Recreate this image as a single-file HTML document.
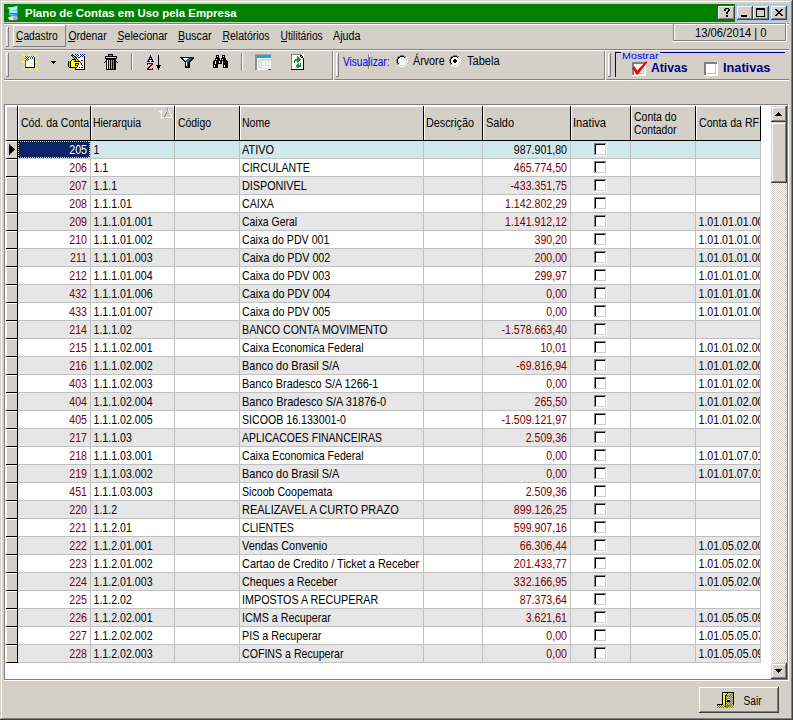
<!DOCTYPE html>
<html><head><meta charset="utf-8"><title>Plano de Contas em Uso pela Empresa</title>
<style>
html,body{margin:0;padding:0;background:#d4d0c8;overflow:hidden}
svg{display:block;font-family:"Liberation Sans",sans-serif}
text{shape-rendering:auto}
</style></head><body>
<svg width="793" height="720" viewBox="0 0 793 720" shape-rendering="crispEdges">
<defs><clipPath id="rfclip"><rect x="696" y="141" width="64" height="530"/></clipPath></defs>
<rect x="0" y="0" width="793" height="720" fill="#d4d0c8"/>
<rect x="1" y="1" width="791" height="1" fill="#fff"/>
<rect x="1" y="1" width="1" height="718" fill="#fff"/>
<rect x="0" y="719" width="793" height="1" fill="#404040"/>
<rect x="792" y="0" width="1" height="720" fill="#404040"/>
<rect x="1" y="718" width="791" height="1" fill="#808080"/>
<rect x="791" y="1" width="1" height="718" fill="#808080"/>
<rect x="4" y="4" width="731" height="18" fill="#008000"/>
<rect x="735" y="4" width="54" height="18" fill="#a6caf0"/>
<g transform="translate(6 5)" shape-rendering="auto">
<path d="M3 3 L6 2 L9 1.5 L12 0.5 V10 L5 11 L3 10 Z" fill="#60d0f8"/>
<path d="M4 3 L12 1 V4 L4 6 Z" fill="#b8f8ff"/>
<path d="M1 3 L4 2 L5 3 L3 4 Z" fill="#f0e8ff"/>
<path d="M11 0 L12 0 V10 L11 10 Z" fill="#8070d0"/>
<rect x="4.5" y="6.5" width="6" height="1.2" fill="#f8f8ff"/>
<rect x="4" y="8" width="7" height="1" fill="#5060a0"/>
<path d="M4 10 L11 9 V12 L5 12 Z" fill="#3898f0"/>
<path d="M2 12.5 Q7 10.5 12 12 L12 14 Q7 16 3 14.5 Z" fill="#f0ecff"/>
<path d="M7 12 Q10 11 12 12 L12 14 Q10 15 7 15 Z" fill="#a8a0e0"/>
</g>
<text transform="translate(25 17) scale(1.04 1)" font-size="11" fill="#fff" font-weight="bold">Plano de Contas em Uso pela Empresa</text>
<rect x="718" y="6" width="17" height="14" fill="#d4d0c8"/>
<rect x="718" y="6" width="17" height="1" fill="#fff"/>
<rect x="718" y="6" width="1" height="14" fill="#fff"/>
<rect x="718" y="19" width="17" height="1" fill="#404040"/>
<rect x="734" y="6" width="1" height="14" fill="#404040"/>
<rect x="719" y="18" width="15" height="1" fill="#808080"/>
<rect x="733" y="7" width="1" height="12" fill="#808080"/>
<rect x="737" y="6" width="16" height="14" fill="#d4d0c8"/>
<rect x="737" y="6" width="16" height="1" fill="#fff"/>
<rect x="737" y="6" width="1" height="14" fill="#fff"/>
<rect x="737" y="19" width="16" height="1" fill="#404040"/>
<rect x="752" y="6" width="1" height="14" fill="#404040"/>
<rect x="738" y="18" width="14" height="1" fill="#808080"/>
<rect x="751" y="7" width="1" height="12" fill="#808080"/>
<rect x="753" y="6" width="16" height="14" fill="#d4d0c8"/>
<rect x="753" y="6" width="16" height="1" fill="#fff"/>
<rect x="753" y="6" width="1" height="14" fill="#fff"/>
<rect x="753" y="19" width="16" height="1" fill="#404040"/>
<rect x="768" y="6" width="1" height="14" fill="#404040"/>
<rect x="754" y="18" width="14" height="1" fill="#808080"/>
<rect x="767" y="7" width="1" height="12" fill="#808080"/>
<rect x="771" y="6" width="16" height="14" fill="#d4d0c8"/>
<rect x="771" y="6" width="16" height="1" fill="#fff"/>
<rect x="771" y="6" width="1" height="14" fill="#fff"/>
<rect x="771" y="19" width="16" height="1" fill="#404040"/>
<rect x="786" y="6" width="1" height="14" fill="#404040"/>
<rect x="772" y="18" width="14" height="1" fill="#808080"/>
<rect x="785" y="7" width="1" height="12" fill="#808080"/>
<rect x="725" y="8" width="4" height="1" fill="#000"/>
<rect x="724" y="9" width="2" height="2" fill="#000"/>
<rect x="728" y="9" width="2" height="2" fill="#000"/>
<rect x="727" y="11" width="2" height="1" fill="#000"/>
<rect x="726" y="12" width="2" height="2" fill="#000"/>
<rect x="726" y="15" width="2" height="2" fill="#000"/>
<rect x="741" y="15" width="6" height="2" fill="#000"/>
<rect x="756" y="8" width="9" height="9" fill="#000"/>
<rect x="757" y="10" width="7" height="6" fill="#d4d0c8"/>
<rect x="775" y="9" width="2" height="1" fill="#000"/>
<rect x="781" y="9" width="2" height="1" fill="#000"/>
<rect x="776" y="10" width="2" height="1" fill="#000"/>
<rect x="780" y="10" width="2" height="1" fill="#000"/>
<rect x="777" y="11" width="4" height="1" fill="#000"/>
<rect x="778" y="12" width="2" height="1" fill="#000"/>
<rect x="777" y="13" width="4" height="1" fill="#000"/>
<rect x="776" y="14" width="2" height="1" fill="#000"/>
<rect x="780" y="14" width="2" height="1" fill="#000"/>
<rect x="775" y="15" width="2" height="1" fill="#000"/>
<rect x="781" y="15" width="2" height="1" fill="#000"/>
<rect x="4" y="23" width="785" height="1" fill="#808080"/>
<rect x="4" y="24" width="785" height="1" fill="#fff"/>
<rect x="6" y="27" width="1" height="20" fill="#fff"/>
<rect x="6" y="27" width="2" height="1" fill="#fff"/>
<rect x="8" y="27" width="1" height="20" fill="#808080"/>
<rect x="6" y="46" width="3" height="1" fill="#808080"/>
<rect x="13" y="25" width="53" height="1" fill="#fff"/>
<rect x="13" y="25" width="1" height="21" fill="#fff"/>
<rect x="13" y="46" width="53" height="1" fill="#808080"/>
<rect x="65" y="25" width="1" height="22" fill="#808080"/>
<text x="16" y="40" font-size="12" textLength="41.6" lengthAdjust="spacingAndGlyphs">Cadastro</text>
<text x="68.5" y="40" font-size="12" textLength="38.1" lengthAdjust="spacingAndGlyphs">Ordenar</text>
<text x="117.5" y="40" font-size="12" textLength="50.1" lengthAdjust="spacingAndGlyphs">Selecionar</text>
<text x="178" y="40" font-size="12" textLength="33.6" lengthAdjust="spacingAndGlyphs">Buscar</text>
<text x="222.5" y="40" font-size="12" textLength="47.1" lengthAdjust="spacingAndGlyphs">Relatórios</text>
<text x="280.6" y="40" font-size="12" textLength="42.1" lengthAdjust="spacingAndGlyphs">Utilitários</text>
<text x="333" y="40" font-size="12" textLength="27.6" lengthAdjust="spacingAndGlyphs">Ajuda</text>
<rect x="16" y="41" width="6" height="1" fill="#000"/>
<rect x="68" y="41" width="7" height="1" fill="#000"/>
<rect x="117" y="41" width="6" height="1" fill="#000"/>
<rect x="178" y="41" width="6" height="1" fill="#000"/>
<rect x="222" y="41" width="6" height="1" fill="#000"/>
<rect x="281" y="41" width="6" height="1" fill="#000"/>
<rect x="673" y="23" width="114" height="1" fill="#808080"/>
<rect x="673" y="23" width="1" height="19" fill="#808080"/>
<rect x="674" y="24" width="112" height="1" fill="#fff"/>
<rect x="674" y="24" width="1" height="17" fill="#fff"/>
<rect x="674" y="40" width="112" height="1" fill="#808080"/>
<rect x="785" y="24" width="1" height="17" fill="#808080"/>
<rect x="673" y="41" width="114" height="1" fill="#fff"/>
<rect x="786" y="23" width="1" height="19" fill="#fff"/>
<text x="695" y="37" font-size="12" textLength="71.5" lengthAdjust="spacingAndGlyphs">13/06/2014 | 0</text>
<rect x="4" y="49" width="785" height="1" fill="#808080"/>
<rect x="4" y="50" width="785" height="1" fill="#fff"/>
<rect x="6" y="53" width="1" height="24" fill="#fff"/>
<rect x="6" y="53" width="2" height="1" fill="#fff"/>
<rect x="8" y="53" width="1" height="24" fill="#808080"/>
<rect x="6" y="76" width="3" height="1" fill="#808080"/>
<rect x="332" y="51" width="1" height="28" fill="#808080"/>
<rect x="333" y="51" width="1" height="28" fill="#fff"/>
<rect x="336" y="53" width="1" height="24" fill="#fff"/>
<rect x="336" y="53" width="2" height="1" fill="#fff"/>
<rect x="338" y="53" width="1" height="24" fill="#808080"/>
<rect x="336" y="76" width="3" height="1" fill="#808080"/>
<rect x="604" y="51" width="1" height="28" fill="#808080"/>
<rect x="605" y="51" width="1" height="28" fill="#fff"/>
<rect x="608" y="53" width="1" height="24" fill="#fff"/>
<rect x="608" y="53" width="2" height="1" fill="#fff"/>
<rect x="610" y="53" width="1" height="24" fill="#808080"/>
<rect x="608" y="76" width="3" height="1" fill="#808080"/>
<rect x="4" y="79" width="785" height="1" fill="#808080"/>
<rect x="4" y="80" width="785" height="1" fill="#fff"/>
<rect x="333" y="79" width="1" height="1" fill="#fff"/>
<rect x="605" y="79" width="1" height="1" fill="#fff"/>
<rect x="131" y="53" width="1" height="18" fill="#808080"/>
<rect x="132" y="53" width="1" height="18" fill="#fff"/>
<rect x="241" y="53" width="1" height="18" fill="#808080"/>
<rect x="242" y="53" width="1" height="18" fill="#fff"/>
<rect x="25" y="56" width="10" height="12" fill="#fff"/>
<rect x="34" y="57" width="1" height="11" fill="#000"/>
<rect x="25" y="67" width="10" height="1" fill="#000"/>
<rect x="25" y="60" width="1" height="7" fill="#606060"/>
<rect x="25" y="56" width="1" height="1" fill="#a00000"/>
<rect x="27" y="56" width="1" height="1" fill="#a00000"/>
<rect x="26" y="57" width="1" height="1" fill="#a00000"/>
<rect x="28" y="57" width="1" height="1" fill="#a00000"/>
<rect x="25" y="58" width="1" height="1" fill="#a00000"/>
<rect x="27" y="58" width="1" height="1" fill="#a00000"/>
<rect x="26" y="59" width="1" height="1" fill="#a00000"/>
<rect x="28" y="59" width="1" height="1" fill="#a00000"/>
<rect x="25" y="60" width="1" height="1" fill="#a00000"/>
<rect x="27" y="60" width="1" height="1" fill="#a00000"/>
<rect x="29" y="56" width="1" height="1" fill="#008080"/>
<rect x="31" y="56" width="1" height="1" fill="#008080"/>
<rect x="33" y="56" width="1" height="1" fill="#008080"/>
<rect x="30" y="57" width="1" height="1" fill="#008080"/>
<rect x="32" y="57" width="1" height="1" fill="#008080"/>
<rect x="34" y="57" width="1" height="1" fill="#008080"/>
<rect x="29" y="58" width="0" height="0" fill="#008080"/>
<rect x="30" y="58" width="1" height="1" fill="#008080"/>
<rect x="32" y="58" width="1" height="1" fill="#008080"/>
<rect x="22" y="54" width="2" height="1" fill="#ffff00"/>
<rect x="23" y="55" width="2" height="1" fill="#ffff00"/>
<rect x="24" y="56" width="1" height="1" fill="#ffff00"/>
<rect x="29" y="54" width="2" height="2" fill="#ffff00"/>
<rect x="36" y="54" width="2" height="1" fill="#ffff00"/>
<rect x="35" y="55" width="2" height="1" fill="#ffff00"/>
<rect x="35" y="56" width="1" height="1" fill="#ffff00"/>
<rect x="22" y="61" width="3" height="2" fill="#ffff00"/>
<rect x="35" y="61" width="3" height="2" fill="#ffff00"/>
<rect x="24" y="67" width="1" height="1" fill="#ffff00"/>
<rect x="23" y="68" width="2" height="1" fill="#ffff00"/>
<rect x="23" y="69" width="1" height="1" fill="#ffff00"/>
<rect x="29" y="68" width="2" height="2" fill="#ffff00"/>
<rect x="35" y="67" width="1" height="1" fill="#ffff00"/>
<rect x="35" y="68" width="2" height="1" fill="#ffff00"/>
<rect x="36" y="69" width="2" height="1" fill="#ffff00"/>
<rect x="51" y="61" width="5" height="1" fill="#000"/>
<rect x="52" y="62" width="3" height="1" fill="#000"/>
<rect x="53" y="63" width="1" height="1" fill="#000"/>
<rect x="72" y="54" width="1" height="1" fill="#000"/>
<rect x="75" y="54" width="1" height="1" fill="#c00000"/>
<rect x="76" y="54" width="1" height="1" fill="#fff"/>
<rect x="77" y="54" width="1" height="1" fill="#c00000"/>
<rect x="78" y="54" width="1" height="1" fill="#fff"/>
<rect x="79" y="54" width="1" height="1" fill="#fff"/>
<rect x="80" y="54" width="1" height="1" fill="#0000a0"/>
<rect x="81" y="54" width="1" height="1" fill="#fff"/>
<rect x="82" y="54" width="1" height="1" fill="#0000a0"/>
<rect x="83" y="54" width="1" height="1" fill="#fff"/>
<rect x="84" y="54" width="1" height="1" fill="#0000a0"/>
<rect x="71" y="55" width="1" height="1" fill="#000"/>
<rect x="72" y="55" width="1" height="1" fill="#c00000"/>
<rect x="73" y="55" width="1" height="1" fill="#000"/>
<rect x="75" y="55" width="1" height="1" fill="#fff"/>
<rect x="76" y="55" width="1" height="1" fill="#c00000"/>
<rect x="77" y="55" width="1" height="1" fill="#fff"/>
<rect x="78" y="55" width="1" height="1" fill="#c00000"/>
<rect x="79" y="55" width="1" height="1" fill="#fff"/>
<rect x="80" y="55" width="1" height="1" fill="#fff"/>
<rect x="81" y="55" width="1" height="1" fill="#0000a0"/>
<rect x="82" y="55" width="1" height="1" fill="#fff"/>
<rect x="83" y="55" width="1" height="1" fill="#0000a0"/>
<rect x="84" y="55" width="1" height="1" fill="#fff"/>
<rect x="72" y="56" width="1" height="1" fill="#000"/>
<rect x="73" y="56" width="1" height="1" fill="#ffff00"/>
<rect x="74" y="56" width="1" height="1" fill="#000"/>
<rect x="75" y="56" width="1" height="1" fill="#c00000"/>
<rect x="76" y="56" width="1" height="1" fill="#fff"/>
<rect x="77" y="56" width="1" height="1" fill="#c00000"/>
<rect x="78" y="56" width="1" height="1" fill="#fff"/>
<rect x="79" y="56" width="1" height="1" fill="#fff"/>
<rect x="80" y="56" width="1" height="1" fill="#0000a0"/>
<rect x="81" y="56" width="1" height="1" fill="#fff"/>
<rect x="82" y="56" width="1" height="1" fill="#0000a0"/>
<rect x="83" y="56" width="1" height="1" fill="#fff"/>
<rect x="84" y="56" width="1" height="1" fill="#000"/>
<rect x="73" y="57" width="1" height="1" fill="#000"/>
<rect x="74" y="57" width="1" height="1" fill="#ffff00"/>
<rect x="75" y="57" width="1" height="1" fill="#000"/>
<rect x="76" y="57" width="1" height="1" fill="#c00000"/>
<rect x="77" y="57" width="1" height="1" fill="#fff"/>
<rect x="78" y="57" width="1" height="1" fill="#c00000"/>
<rect x="79" y="57" width="1" height="1" fill="#000"/>
<rect x="80" y="57" width="1" height="1" fill="#fff"/>
<rect x="81" y="57" width="1" height="1" fill="#fff"/>
<rect x="82" y="57" width="1" height="1" fill="#fff"/>
<rect x="83" y="57" width="1" height="1" fill="#fff"/>
<rect x="84" y="57" width="1" height="1" fill="#000"/>
<rect x="74" y="58" width="1" height="1" fill="#000"/>
<rect x="75" y="58" width="1" height="1" fill="#ffff00"/>
<rect x="76" y="58" width="1" height="1" fill="#000"/>
<rect x="77" y="58" width="1" height="1" fill="#fff"/>
<rect x="78" y="58" width="1" height="1" fill="#fff"/>
<rect x="79" y="58" width="1" height="1" fill="#fff"/>
<rect x="80" y="58" width="1" height="1" fill="#fff"/>
<rect x="81" y="58" width="1" height="1" fill="#fff"/>
<rect x="82" y="58" width="1" height="1" fill="#fff"/>
<rect x="83" y="58" width="1" height="1" fill="#fff"/>
<rect x="84" y="58" width="1" height="1" fill="#000"/>
<rect x="72" y="59" width="1" height="1" fill="#000"/>
<rect x="73" y="59" width="1" height="1" fill="#000"/>
<rect x="74" y="59" width="1" height="1" fill="#000"/>
<rect x="75" y="59" width="1" height="1" fill="#000"/>
<rect x="76" y="59" width="1" height="1" fill="#ffff00"/>
<rect x="77" y="59" width="1" height="1" fill="#000"/>
<rect x="78" y="59" width="1" height="1" fill="#fff"/>
<rect x="79" y="59" width="1" height="1" fill="#fff"/>
<rect x="80" y="59" width="1" height="1" fill="#fff"/>
<rect x="81" y="59" width="1" height="1" fill="#fff"/>
<rect x="82" y="59" width="1" height="1" fill="#fff"/>
<rect x="83" y="59" width="1" height="1" fill="#fff"/>
<rect x="84" y="59" width="1" height="1" fill="#000"/>
<rect x="71" y="60" width="1" height="1" fill="#000"/>
<rect x="72" y="60" width="1" height="1" fill="#ffff00"/>
<rect x="73" y="60" width="1" height="1" fill="#ffff00"/>
<rect x="74" y="60" width="1" height="1" fill="#ffff00"/>
<rect x="75" y="60" width="1" height="1" fill="#000"/>
<rect x="77" y="60" width="1" height="1" fill="#ffff00"/>
<rect x="78" y="60" width="1" height="1" fill="#000"/>
<rect x="79" y="60" width="1" height="1" fill="#fff"/>
<rect x="80" y="60" width="1" height="1" fill="#fff"/>
<rect x="81" y="60" width="1" height="1" fill="#000"/>
<rect x="82" y="60" width="1" height="1" fill="#000"/>
<rect x="83" y="60" width="1" height="1" fill="#fff"/>
<rect x="84" y="60" width="1" height="1" fill="#000"/>
<rect x="68" y="61" width="1" height="1" fill="#000"/>
<rect x="69" y="61" width="1" height="1" fill="#00ffff"/>
<rect x="70" y="61" width="1" height="1" fill="#000"/>
<rect x="71" y="61" width="1" height="1" fill="#ffff00"/>
<rect x="72" y="61" width="1" height="1" fill="#fff"/>
<rect x="73" y="61" width="1" height="1" fill="#ffff00"/>
<rect x="74" y="61" width="1" height="1" fill="#000"/>
<rect x="75" y="61" width="1" height="1" fill="#000"/>
<rect x="76" y="61" width="1" height="1" fill="#000"/>
<rect x="77" y="61" width="1" height="1" fill="#000"/>
<rect x="78" y="61" width="1" height="1" fill="#000"/>
<rect x="79" y="61" width="1" height="1" fill="#000"/>
<rect x="80" y="61" width="1" height="1" fill="#fff"/>
<rect x="81" y="61" width="1" height="1" fill="#fff"/>
<rect x="82" y="61" width="1" height="1" fill="#fff"/>
<rect x="83" y="61" width="1" height="1" fill="#fff"/>
<rect x="84" y="61" width="1" height="1" fill="#000"/>
<rect x="68" y="62" width="1" height="1" fill="#000"/>
<rect x="69" y="62" width="1" height="1" fill="#00ffff"/>
<rect x="70" y="62" width="1" height="1" fill="#000"/>
<rect x="71" y="62" width="1" height="1" fill="#fff"/>
<rect x="72" y="62" width="1" height="1" fill="#ffff00"/>
<rect x="73" y="62" width="1" height="1" fill="#fff"/>
<rect x="74" y="62" width="1" height="1" fill="#ffff00"/>
<rect x="75" y="62" width="1" height="1" fill="#fff"/>
<rect x="76" y="62" width="1" height="1" fill="#ffff00"/>
<rect x="77" y="62" width="1" height="1" fill="#fff"/>
<rect x="78" y="62" width="1" height="1" fill="#ffff00"/>
<rect x="79" y="62" width="1" height="1" fill="#fff"/>
<rect x="80" y="62" width="1" height="1" fill="#000"/>
<rect x="81" y="62" width="1" height="1" fill="#fff"/>
<rect x="82" y="62" width="1" height="1" fill="#fff"/>
<rect x="83" y="62" width="1" height="1" fill="#fff"/>
<rect x="84" y="62" width="1" height="1" fill="#000"/>
<rect x="68" y="63" width="1" height="1" fill="#000"/>
<rect x="69" y="63" width="1" height="1" fill="#00ffff"/>
<rect x="70" y="63" width="1" height="1" fill="#000"/>
<rect x="71" y="63" width="1" height="1" fill="#ffff00"/>
<rect x="72" y="63" width="1" height="1" fill="#fff"/>
<rect x="73" y="63" width="1" height="1" fill="#ffff00"/>
<rect x="74" y="63" width="1" height="1" fill="#fff"/>
<rect x="75" y="63" width="1" height="1" fill="#000"/>
<rect x="76" y="63" width="1" height="1" fill="#000"/>
<rect x="77" y="63" width="1" height="1" fill="#000"/>
<rect x="78" y="63" width="1" height="1" fill="#000"/>
<rect x="79" y="63" width="1" height="1" fill="#fff"/>
<rect x="80" y="63" width="1" height="1" fill="#ffff00"/>
<rect x="81" y="63" width="1" height="1" fill="#000"/>
<rect x="82" y="63" width="1" height="1" fill="#fff"/>
<rect x="83" y="63" width="1" height="1" fill="#fff"/>
<rect x="84" y="63" width="1" height="1" fill="#000"/>
<rect x="68" y="64" width="1" height="1" fill="#000"/>
<rect x="69" y="64" width="1" height="1" fill="#00ffff"/>
<rect x="70" y="64" width="1" height="1" fill="#000"/>
<rect x="71" y="64" width="1" height="1" fill="#fff"/>
<rect x="72" y="64" width="1" height="1" fill="#ffff00"/>
<rect x="73" y="64" width="1" height="1" fill="#fff"/>
<rect x="74" y="64" width="1" height="1" fill="#ffff00"/>
<rect x="75" y="64" width="1" height="1" fill="#000"/>
<rect x="76" y="64" width="1" height="1" fill="#ffff00"/>
<rect x="77" y="64" width="1" height="1" fill="#fff"/>
<rect x="78" y="64" width="1" height="1" fill="#000"/>
<rect x="79" y="64" width="1" height="1" fill="#fff"/>
<rect x="80" y="64" width="1" height="1" fill="#fff"/>
<rect x="81" y="64" width="1" height="1" fill="#000"/>
<rect x="82" y="64" width="1" height="1" fill="#fff"/>
<rect x="83" y="64" width="1" height="1" fill="#fff"/>
<rect x="84" y="64" width="1" height="1" fill="#000"/>
<rect x="68" y="65" width="1" height="1" fill="#000"/>
<rect x="69" y="65" width="1" height="1" fill="#00ffff"/>
<rect x="70" y="65" width="1" height="1" fill="#000"/>
<rect x="71" y="65" width="1" height="1" fill="#ffff00"/>
<rect x="72" y="65" width="1" height="1" fill="#fff"/>
<rect x="73" y="65" width="1" height="1" fill="#ffff00"/>
<rect x="74" y="65" width="1" height="1" fill="#fff"/>
<rect x="75" y="65" width="1" height="1" fill="#000"/>
<rect x="76" y="65" width="1" height="1" fill="#000"/>
<rect x="77" y="65" width="1" height="1" fill="#000"/>
<rect x="78" y="65" width="1" height="1" fill="#fff"/>
<rect x="79" y="65" width="1" height="1" fill="#fff"/>
<rect x="80" y="65" width="1" height="1" fill="#fff"/>
<rect x="81" y="65" width="1" height="1" fill="#fff"/>
<rect x="82" y="65" width="1" height="1" fill="#000"/>
<rect x="83" y="65" width="1" height="1" fill="#fff"/>
<rect x="84" y="65" width="1" height="1" fill="#000"/>
<rect x="68" y="66" width="1" height="1" fill="#000"/>
<rect x="69" y="66" width="1" height="1" fill="#00ffff"/>
<rect x="70" y="66" width="1" height="1" fill="#000"/>
<rect x="71" y="66" width="1" height="1" fill="#fff"/>
<rect x="72" y="66" width="1" height="1" fill="#ffff00"/>
<rect x="73" y="66" width="1" height="1" fill="#ffff00"/>
<rect x="74" y="66" width="1" height="1" fill="#ffff00"/>
<rect x="75" y="66" width="1" height="1" fill="#fff"/>
<rect x="76" y="66" width="1" height="1" fill="#ffff00"/>
<rect x="77" y="66" width="1" height="1" fill="#000"/>
<rect x="78" y="66" width="1" height="1" fill="#fff"/>
<rect x="79" y="66" width="1" height="1" fill="#fff"/>
<rect x="80" y="66" width="1" height="1" fill="#fff"/>
<rect x="81" y="66" width="1" height="1" fill="#fff"/>
<rect x="82" y="66" width="1" height="1" fill="#fff"/>
<rect x="83" y="66" width="1" height="1" fill="#fff"/>
<rect x="84" y="66" width="1" height="1" fill="#000"/>
<rect x="69" y="67" width="1" height="1" fill="#000"/>
<rect x="70" y="67" width="1" height="1" fill="#000"/>
<rect x="71" y="67" width="1" height="1" fill="#000"/>
<rect x="72" y="67" width="1" height="1" fill="#000"/>
<rect x="73" y="67" width="1" height="1" fill="#000"/>
<rect x="74" y="67" width="1" height="1" fill="#000"/>
<rect x="75" y="67" width="1" height="1" fill="#000"/>
<rect x="76" y="67" width="1" height="1" fill="#000"/>
<rect x="77" y="67" width="1" height="1" fill="#fff"/>
<rect x="78" y="67" width="1" height="1" fill="#fff"/>
<rect x="79" y="67" width="1" height="1" fill="#000"/>
<rect x="80" y="67" width="1" height="1" fill="#fff"/>
<rect x="81" y="67" width="1" height="1" fill="#000"/>
<rect x="82" y="67" width="1" height="1" fill="#000"/>
<rect x="83" y="67" width="1" height="1" fill="#fff"/>
<rect x="84" y="67" width="1" height="1" fill="#000"/>
<rect x="75" y="68" width="1" height="1" fill="#000"/>
<rect x="76" y="68" width="1" height="1" fill="#fff"/>
<rect x="77" y="68" width="1" height="1" fill="#fff"/>
<rect x="78" y="68" width="1" height="1" fill="#fff"/>
<rect x="79" y="68" width="1" height="1" fill="#fff"/>
<rect x="80" y="68" width="1" height="1" fill="#fff"/>
<rect x="81" y="68" width="1" height="1" fill="#fff"/>
<rect x="82" y="68" width="1" height="1" fill="#fff"/>
<rect x="83" y="68" width="1" height="1" fill="#fff"/>
<rect x="84" y="68" width="1" height="1" fill="#000"/>
<rect x="75" y="69" width="1" height="1" fill="#000"/>
<rect x="76" y="69" width="1" height="1" fill="#000"/>
<rect x="77" y="69" width="1" height="1" fill="#000"/>
<rect x="78" y="69" width="1" height="1" fill="#000"/>
<rect x="79" y="69" width="1" height="1" fill="#000"/>
<rect x="80" y="69" width="1" height="1" fill="#000"/>
<rect x="81" y="69" width="1" height="1" fill="#000"/>
<rect x="82" y="69" width="1" height="1" fill="#000"/>
<rect x="83" y="69" width="1" height="1" fill="#000"/>
<rect x="84" y="69" width="1" height="1" fill="#000"/>
<rect x="108" y="54" width="5" height="2" fill="#000"/>
<rect x="109" y="55" width="3" height="1" fill="#808080"/>
<rect x="105" y="56" width="12" height="3" fill="#000"/>
<rect x="106" y="57" width="10" height="1" fill="#d0d0d0"/>
<rect x="106" y="59" width="10" height="11" fill="#000"/>
<rect x="107" y="60" width="1" height="9" fill="#fff"/>
<rect x="109" y="60" width="1" height="9" fill="#c0c0c0"/>
<rect x="111" y="60" width="1" height="9" fill="#a0a0a0"/>
<rect x="113" y="60" width="1" height="9" fill="#808080"/>
<rect x="104" y="62" width="1" height="1" fill="#000"/>
<rect x="117" y="62" width="1" height="1" fill="#000"/>
<rect x="105" y="61" width="1" height="1" fill="#000"/>
<rect x="116" y="61" width="1" height="1" fill="#000"/>
<rect x="150" y="55" width="1" height="1" fill="#000080"/>
<rect x="150" y="56" width="1" height="1" fill="#000080"/>
<rect x="149" y="57" width="1" height="1" fill="#000080"/>
<rect x="150" y="57" width="1" height="1" fill="#000080"/>
<rect x="151" y="57" width="1" height="1" fill="#000080"/>
<rect x="149" y="58" width="1" height="1" fill="#000080"/>
<rect x="151" y="58" width="1" height="1" fill="#000080"/>
<rect x="148" y="59" width="1" height="1" fill="#000080"/>
<rect x="149" y="59" width="1" height="1" fill="#000080"/>
<rect x="150" y="59" width="1" height="1" fill="#000080"/>
<rect x="151" y="59" width="1" height="1" fill="#000080"/>
<rect x="152" y="59" width="1" height="1" fill="#000080"/>
<rect x="148" y="60" width="1" height="1" fill="#000080"/>
<rect x="152" y="60" width="1" height="1" fill="#000080"/>
<rect x="147" y="61" width="1" height="1" fill="#000080"/>
<rect x="148" y="61" width="1" height="1" fill="#000080"/>
<rect x="149" y="61" width="1" height="1" fill="#000080"/>
<rect x="151" y="61" width="1" height="1" fill="#000080"/>
<rect x="152" y="61" width="1" height="1" fill="#000080"/>
<rect x="153" y="61" width="1" height="1" fill="#000080"/>
<rect x="150" y="58" width="1" height="1" fill="#fff"/>
<rect x="147" y="63" width="1" height="1" fill="#800000"/>
<rect x="148" y="63" width="1" height="1" fill="#800000"/>
<rect x="149" y="63" width="1" height="1" fill="#800000"/>
<rect x="150" y="63" width="1" height="1" fill="#800000"/>
<rect x="151" y="63" width="1" height="1" fill="#800000"/>
<rect x="152" y="63" width="1" height="1" fill="#800000"/>
<rect x="147" y="64" width="1" height="1" fill="#800000"/>
<rect x="151" y="64" width="1" height="1" fill="#800000"/>
<rect x="152" y="64" width="1" height="1" fill="#800000"/>
<rect x="150" y="65" width="1" height="1" fill="#800000"/>
<rect x="151" y="65" width="1" height="1" fill="#800000"/>
<rect x="149" y="66" width="1" height="1" fill="#800000"/>
<rect x="150" y="66" width="1" height="1" fill="#800000"/>
<rect x="148" y="67" width="1" height="1" fill="#800000"/>
<rect x="149" y="67" width="1" height="1" fill="#800000"/>
<rect x="147" y="68" width="1" height="1" fill="#800000"/>
<rect x="148" y="68" width="1" height="1" fill="#800000"/>
<rect x="152" y="68" width="1" height="1" fill="#800000"/>
<rect x="147" y="69" width="1" height="1" fill="#800000"/>
<rect x="148" y="69" width="1" height="1" fill="#800000"/>
<rect x="149" y="69" width="1" height="1" fill="#800000"/>
<rect x="150" y="69" width="1" height="1" fill="#800000"/>
<rect x="151" y="69" width="1" height="1" fill="#800000"/>
<rect x="152" y="69" width="1" height="1" fill="#800000"/>
<rect x="158" y="55" width="1" height="14" fill="#000"/>
<rect x="156" y="65" width="5" height="1" fill="#000"/>
<rect x="157" y="66" width="3" height="2" fill="#000"/>
<rect x="158" y="68" width="1" height="2" fill="#000"/>
<path d="M180 57 H194 V58 L190 63 V68 H185 V63 L180 58 Z" fill="#000"/>
<path d="M182 58 H192 L188 62 V67 H187 V62 Z" fill="#008080"/>
<path d="M182 58 H188 L186 61 V66 H187 V62 Z" fill="#fff"/>
<path d="M216 55 H219 V58 H220 V60 H221 V58 H222 V55 H225 V58 H226 V60 H227 V61 H228 V68 H223 V64 H218 V68 H213 V61 H214 V60 H215 V58 H216 Z" fill="#000"/>
<rect x="217" y="56" width="1" height="1" fill="#fff"/>
<rect x="223" y="56" width="1" height="1" fill="#fff"/>
<rect x="216" y="59" width="1" height="1" fill="#fff"/>
<rect x="222" y="59" width="1" height="1" fill="#fff"/>
<rect x="215" y="61" width="1" height="3" fill="#fff"/>
<rect x="219" y="61" width="1" height="2" fill="#fff"/>
<rect x="222" y="61" width="1" height="3" fill="#fff"/>
<rect x="214" y="65" width="1" height="2" fill="#fff"/>
<rect x="224" y="65" width="1" height="2" fill="#fff"/>
<rect x="255" y="54" width="16" height="16" fill="#fff"/>
<rect x="255" y="54" width="2" height="16" fill="#8c8c8c"/>
<rect x="255" y="54" width="16" height="1" fill="#b0a8a0"/>
<rect x="257" y="55" width="14" height="3" fill="#10a8f0"/>
<rect x="258" y="59" width="13" height="2" fill="#d8d8d8"/>
<rect x="258" y="59" width="3" height="10" fill="#e0e0e0"/>
<rect x="261" y="59" width="1" height="11" fill="#e0e0e0"/>
<rect x="265" y="59" width="1" height="11" fill="#e0e0e0"/>
<rect x="268" y="59" width="1" height="11" fill="#e0e0e0"/>
<rect x="258" y="62" width="13" height="1" fill="#e4e4e4"/>
<rect x="258" y="65" width="13" height="1" fill="#e4e4e4"/>
<rect x="258" y="68" width="13" height="1" fill="#e4e4e4"/>
<rect x="268" y="69" width="3" height="1" fill="#606060"/>
<rect x="291" y="54" width="13" height="16" fill="#fff"/>
<rect x="291" y="54" width="10" height="1" fill="#808080"/>
<rect x="291" y="54" width="1" height="16" fill="#808080"/>
<rect x="303" y="58" width="1" height="12" fill="#000"/>
<rect x="291" y="69" width="13" height="1" fill="#000"/>
<rect x="300" y="55" width="2" height="1" fill="#000"/>
<rect x="302" y="56" width="1" height="1" fill="#000"/>
<rect x="301" y="57" width="2" height="1" fill="#000"/>
<rect x="300" y="56" width="1" height="1" fill="#000"/>
<rect x="301" y="56" width="1" height="1" fill="#fff"/>
<rect x="296" y="58" width="1" height="1" fill="#e8e870"/>
<rect x="298" y="58" width="1" height="1" fill="#e8e870"/>
<rect x="294" y="60" width="1" height="1" fill="#e8e870"/>
<rect x="300" y="60" width="1" height="1" fill="#e8e870"/>
<rect x="294" y="64" width="1" height="1" fill="#e8e870"/>
<rect x="300" y="66" width="1" height="1" fill="#e8e870"/>
<rect x="296" y="67" width="1" height="1" fill="#e8e870"/>
<rect x="298" y="67" width="1" height="1" fill="#e8e870"/>
<path d="M297 56 L301 59.5 L297 63 V61 H295 V59 H297 Z" fill="#10a010"/>
<path d="M299 63 L295 66 L299 68.5 V67 H301 V65 H299 Z" fill="#10a010"/>
<rect x="294" y="60" width="1" height="3" fill="#006090"/>
<rect x="300" y="63" width="1" height="3" fill="#006090"/>
<rect x="368" y="54" width="1" height="15" fill="#808080"/>
<rect x="369" y="54" width="1" height="15" fill="#fff"/>
<text x="343" y="66" font-size="12" fill="#0000ff" textLength="46.5" lengthAdjust="spacingAndGlyphs">Visualizar:</text>
<rect x="400" y="57" width="4" height="1" fill="#fff"/>
<rect x="399" y="58" width="6" height="1" fill="#fff"/>
<rect x="398" y="59" width="8" height="1" fill="#fff"/>
<rect x="398" y="60" width="8" height="1" fill="#fff"/>
<rect x="398" y="61" width="8" height="1" fill="#fff"/>
<rect x="398" y="62" width="8" height="1" fill="#fff"/>
<rect x="399" y="63" width="6" height="1" fill="#fff"/>
<rect x="400" y="64" width="4" height="1" fill="#fff"/>
<rect x="400" y="55" width="1" height="1" fill="#808080"/>
<rect x="401" y="55" width="1" height="1" fill="#808080"/>
<rect x="402" y="55" width="1" height="1" fill="#808080"/>
<rect x="403" y="55" width="1" height="1" fill="#808080"/>
<rect x="398" y="56" width="1" height="1" fill="#808080"/>
<rect x="399" y="56" width="1" height="1" fill="#808080"/>
<rect x="404" y="56" width="1" height="1" fill="#808080"/>
<rect x="405" y="56" width="1" height="1" fill="#808080"/>
<rect x="397" y="57" width="1" height="1" fill="#808080"/>
<rect x="406" y="57" width="1" height="1" fill="#fff"/>
<rect x="397" y="58" width="1" height="1" fill="#808080"/>
<rect x="406" y="58" width="1" height="1" fill="#fff"/>
<rect x="396" y="59" width="1" height="1" fill="#808080"/>
<rect x="407" y="59" width="1" height="1" fill="#fff"/>
<rect x="396" y="60" width="1" height="1" fill="#808080"/>
<rect x="407" y="60" width="1" height="1" fill="#fff"/>
<rect x="396" y="61" width="1" height="1" fill="#808080"/>
<rect x="407" y="61" width="1" height="1" fill="#fff"/>
<rect x="396" y="62" width="1" height="1" fill="#808080"/>
<rect x="407" y="62" width="1" height="1" fill="#fff"/>
<rect x="397" y="63" width="1" height="1" fill="#808080"/>
<rect x="406" y="63" width="1" height="1" fill="#fff"/>
<rect x="397" y="64" width="1" height="1" fill="#808080"/>
<rect x="406" y="64" width="1" height="1" fill="#fff"/>
<rect x="398" y="65" width="1" height="1" fill="#fff"/>
<rect x="399" y="65" width="1" height="1" fill="#fff"/>
<rect x="404" y="65" width="1" height="1" fill="#fff"/>
<rect x="405" y="65" width="1" height="1" fill="#fff"/>
<rect x="400" y="66" width="1" height="1" fill="#fff"/>
<rect x="401" y="66" width="1" height="1" fill="#fff"/>
<rect x="402" y="66" width="1" height="1" fill="#fff"/>
<rect x="403" y="66" width="1" height="1" fill="#fff"/>
<rect x="400" y="56" width="1" height="1" fill="#000"/>
<rect x="401" y="56" width="1" height="1" fill="#000"/>
<rect x="402" y="56" width="1" height="1" fill="#000"/>
<rect x="403" y="56" width="1" height="1" fill="#000"/>
<rect x="398" y="57" width="1" height="1" fill="#000"/>
<rect x="399" y="57" width="1" height="1" fill="#000"/>
<rect x="404" y="57" width="1" height="1" fill="#000"/>
<rect x="405" y="57" width="1" height="1" fill="#d4d0c8"/>
<rect x="398" y="58" width="1" height="1" fill="#000"/>
<rect x="405" y="58" width="1" height="1" fill="#d4d0c8"/>
<rect x="397" y="59" width="1" height="1" fill="#000"/>
<rect x="406" y="59" width="1" height="1" fill="#d4d0c8"/>
<rect x="397" y="60" width="1" height="1" fill="#000"/>
<rect x="406" y="60" width="1" height="1" fill="#d4d0c8"/>
<rect x="397" y="61" width="1" height="1" fill="#000"/>
<rect x="406" y="61" width="1" height="1" fill="#d4d0c8"/>
<rect x="397" y="62" width="1" height="1" fill="#000"/>
<rect x="406" y="62" width="1" height="1" fill="#d4d0c8"/>
<rect x="398" y="63" width="1" height="1" fill="#000"/>
<rect x="405" y="63" width="1" height="1" fill="#d4d0c8"/>
<rect x="398" y="64" width="1" height="1" fill="#d4d0c8"/>
<rect x="399" y="64" width="1" height="1" fill="#d4d0c8"/>
<rect x="404" y="64" width="1" height="1" fill="#d4d0c8"/>
<rect x="405" y="64" width="1" height="1" fill="#d4d0c8"/>
<rect x="400" y="65" width="1" height="1" fill="#d4d0c8"/>
<rect x="401" y="65" width="1" height="1" fill="#d4d0c8"/>
<rect x="402" y="65" width="1" height="1" fill="#d4d0c8"/>
<rect x="403" y="65" width="1" height="1" fill="#d4d0c8"/>
<text x="413" y="65" font-size="12" textLength="31.6" lengthAdjust="spacingAndGlyphs">Árvore</text>
<rect x="453" y="57" width="4" height="1" fill="#fff"/>
<rect x="452" y="58" width="6" height="1" fill="#fff"/>
<rect x="451" y="59" width="8" height="1" fill="#fff"/>
<rect x="451" y="60" width="8" height="1" fill="#fff"/>
<rect x="451" y="61" width="8" height="1" fill="#fff"/>
<rect x="451" y="62" width="8" height="1" fill="#fff"/>
<rect x="452" y="63" width="6" height="1" fill="#fff"/>
<rect x="453" y="64" width="4" height="1" fill="#fff"/>
<rect x="453" y="55" width="1" height="1" fill="#808080"/>
<rect x="454" y="55" width="1" height="1" fill="#808080"/>
<rect x="455" y="55" width="1" height="1" fill="#808080"/>
<rect x="456" y="55" width="1" height="1" fill="#808080"/>
<rect x="451" y="56" width="1" height="1" fill="#808080"/>
<rect x="452" y="56" width="1" height="1" fill="#808080"/>
<rect x="457" y="56" width="1" height="1" fill="#808080"/>
<rect x="458" y="56" width="1" height="1" fill="#808080"/>
<rect x="450" y="57" width="1" height="1" fill="#808080"/>
<rect x="459" y="57" width="1" height="1" fill="#fff"/>
<rect x="450" y="58" width="1" height="1" fill="#808080"/>
<rect x="459" y="58" width="1" height="1" fill="#fff"/>
<rect x="449" y="59" width="1" height="1" fill="#808080"/>
<rect x="460" y="59" width="1" height="1" fill="#fff"/>
<rect x="449" y="60" width="1" height="1" fill="#808080"/>
<rect x="460" y="60" width="1" height="1" fill="#fff"/>
<rect x="449" y="61" width="1" height="1" fill="#808080"/>
<rect x="460" y="61" width="1" height="1" fill="#fff"/>
<rect x="449" y="62" width="1" height="1" fill="#808080"/>
<rect x="460" y="62" width="1" height="1" fill="#fff"/>
<rect x="450" y="63" width="1" height="1" fill="#808080"/>
<rect x="459" y="63" width="1" height="1" fill="#fff"/>
<rect x="450" y="64" width="1" height="1" fill="#808080"/>
<rect x="459" y="64" width="1" height="1" fill="#fff"/>
<rect x="451" y="65" width="1" height="1" fill="#fff"/>
<rect x="452" y="65" width="1" height="1" fill="#fff"/>
<rect x="457" y="65" width="1" height="1" fill="#fff"/>
<rect x="458" y="65" width="1" height="1" fill="#fff"/>
<rect x="453" y="66" width="1" height="1" fill="#fff"/>
<rect x="454" y="66" width="1" height="1" fill="#fff"/>
<rect x="455" y="66" width="1" height="1" fill="#fff"/>
<rect x="456" y="66" width="1" height="1" fill="#fff"/>
<rect x="453" y="56" width="1" height="1" fill="#000"/>
<rect x="454" y="56" width="1" height="1" fill="#000"/>
<rect x="455" y="56" width="1" height="1" fill="#000"/>
<rect x="456" y="56" width="1" height="1" fill="#000"/>
<rect x="451" y="57" width="1" height="1" fill="#000"/>
<rect x="452" y="57" width="1" height="1" fill="#000"/>
<rect x="457" y="57" width="1" height="1" fill="#000"/>
<rect x="458" y="57" width="1" height="1" fill="#d4d0c8"/>
<rect x="451" y="58" width="1" height="1" fill="#000"/>
<rect x="458" y="58" width="1" height="1" fill="#d4d0c8"/>
<rect x="450" y="59" width="1" height="1" fill="#000"/>
<rect x="459" y="59" width="1" height="1" fill="#d4d0c8"/>
<rect x="450" y="60" width="1" height="1" fill="#000"/>
<rect x="459" y="60" width="1" height="1" fill="#d4d0c8"/>
<rect x="450" y="61" width="1" height="1" fill="#000"/>
<rect x="459" y="61" width="1" height="1" fill="#d4d0c8"/>
<rect x="450" y="62" width="1" height="1" fill="#000"/>
<rect x="459" y="62" width="1" height="1" fill="#d4d0c8"/>
<rect x="451" y="63" width="1" height="1" fill="#000"/>
<rect x="458" y="63" width="1" height="1" fill="#d4d0c8"/>
<rect x="451" y="64" width="1" height="1" fill="#d4d0c8"/>
<rect x="452" y="64" width="1" height="1" fill="#d4d0c8"/>
<rect x="457" y="64" width="1" height="1" fill="#d4d0c8"/>
<rect x="458" y="64" width="1" height="1" fill="#d4d0c8"/>
<rect x="453" y="65" width="1" height="1" fill="#d4d0c8"/>
<rect x="454" y="65" width="1" height="1" fill="#d4d0c8"/>
<rect x="455" y="65" width="1" height="1" fill="#d4d0c8"/>
<rect x="456" y="65" width="1" height="1" fill="#d4d0c8"/>
<rect x="454" y="59" width="2" height="1" fill="#000"/>
<rect x="453" y="60" width="4" height="2" fill="#000"/>
<rect x="454" y="62" width="2" height="1" fill="#000"/>
<text x="467" y="65" font-size="12" textLength="32.6" lengthAdjust="spacingAndGlyphs">Tabela</text>
<rect x="615" y="52" width="1" height="25" fill="#000080"/>
<rect x="615" y="52" width="6" height="1" fill="#000080"/>
<rect x="660" y="52" width="125" height="1" fill="#000080"/>
<text x="622" y="59" font-size="9.8" fill="#0000ff" textLength="36.5" lengthAdjust="spacingAndGlyphs">Mostrar</text>
<rect x="632" y="62" width="14" height="14" fill="#fff"/>
<rect x="632" y="62" width="13" height="2" fill="#808080"/>
<rect x="632" y="62" width="2" height="13" fill="#808080"/>
<rect x="634" y="73" width="10" height="1" fill="#c0c0c0"/>
<rect x="643" y="64" width="1" height="10" fill="#c0c0c0"/>
<path d="M632 67.6 L634.6 66.6 L637.2 70.6 L645.6 61.6 L647.8 61.8 L637.8 74.8 L636.6 74.8 Z" fill="#ff0000" shape-rendering="auto"/>
<text x="651" y="72" font-size="12" font-weight="bold" fill="#000080" textLength="36.4" lengthAdjust="spacingAndGlyphs">Ativas</text>
<rect x="704" y="62" width="14" height="14" fill="#fff"/>
<rect x="704" y="62" width="13" height="2" fill="#808080"/>
<rect x="704" y="62" width="2" height="13" fill="#808080"/>
<rect x="706" y="73" width="10" height="1" fill="#c0c0c0"/>
<rect x="715" y="64" width="1" height="10" fill="#c0c0c0"/>
<text x="723" y="72" font-size="12" font-weight="bold" fill="#000080" textLength="47.4" lengthAdjust="spacingAndGlyphs">Inativas</text>
<rect x="4" y="104" width="785" height="1" fill="#808080"/>
<rect x="4" y="104" width="1" height="577" fill="#808080"/>
<rect x="5" y="105" width="783" height="1" fill="#fff"/>
<rect x="5" y="105" width="1" height="575" fill="#fff"/>
<rect x="5" y="679" width="783" height="1" fill="#808080"/>
<rect x="787" y="105" width="1" height="575" fill="#808080"/>
<rect x="4" y="680" width="785" height="1" fill="#fff"/>
<rect x="788" y="104" width="1" height="577" fill="#fff"/>
<rect x="6" y="106" width="781" height="573" fill="#fff"/>
<rect x="6" y="106" width="11" height="34" fill="#d4d0c8"/>
<rect x="6" y="106" width="11" height="1" fill="#fff"/>
<rect x="6" y="106" width="1" height="34" fill="#fff"/>
<rect x="17" y="106" width="1" height="35" fill="#000"/>
<rect x="18" y="106" width="72" height="34" fill="#d4d0c8"/>
<rect x="18" y="106" width="72" height="1" fill="#fff"/>
<rect x="18" y="106" width="1" height="34" fill="#fff"/>
<rect x="90" y="106" width="1" height="35" fill="#000"/>
<rect x="91" y="106" width="83" height="34" fill="#d4d0c8"/>
<rect x="91" y="106" width="83" height="1" fill="#fff"/>
<rect x="91" y="106" width="1" height="34" fill="#fff"/>
<rect x="174" y="106" width="1" height="35" fill="#000"/>
<rect x="175" y="106" width="64" height="34" fill="#d4d0c8"/>
<rect x="175" y="106" width="64" height="1" fill="#fff"/>
<rect x="175" y="106" width="1" height="34" fill="#fff"/>
<rect x="239" y="106" width="1" height="35" fill="#000"/>
<rect x="240" y="106" width="183" height="34" fill="#d4d0c8"/>
<rect x="240" y="106" width="183" height="1" fill="#fff"/>
<rect x="240" y="106" width="1" height="34" fill="#fff"/>
<rect x="423" y="106" width="1" height="35" fill="#000"/>
<rect x="424" y="106" width="58" height="34" fill="#d4d0c8"/>
<rect x="424" y="106" width="58" height="1" fill="#fff"/>
<rect x="424" y="106" width="1" height="34" fill="#fff"/>
<rect x="482" y="106" width="1" height="35" fill="#000"/>
<rect x="483" y="106" width="87" height="34" fill="#d4d0c8"/>
<rect x="483" y="106" width="87" height="1" fill="#fff"/>
<rect x="483" y="106" width="1" height="34" fill="#fff"/>
<rect x="570" y="106" width="1" height="35" fill="#000"/>
<rect x="571" y="106" width="59" height="34" fill="#d4d0c8"/>
<rect x="571" y="106" width="59" height="1" fill="#fff"/>
<rect x="571" y="106" width="1" height="34" fill="#fff"/>
<rect x="630" y="106" width="1" height="35" fill="#000"/>
<rect x="631" y="106" width="64" height="34" fill="#d4d0c8"/>
<rect x="631" y="106" width="64" height="1" fill="#fff"/>
<rect x="631" y="106" width="1" height="34" fill="#fff"/>
<rect x="695" y="106" width="1" height="35" fill="#000"/>
<rect x="696" y="106" width="64" height="34" fill="#d4d0c8"/>
<rect x="696" y="106" width="64" height="1" fill="#fff"/>
<rect x="696" y="106" width="1" height="34" fill="#fff"/>
<rect x="760" y="106" width="1" height="35" fill="#000"/>
<rect x="6" y="140" width="755" height="1" fill="#000"/>
<text x="21" y="127" font-size="12" textLength="68.0" lengthAdjust="spacingAndGlyphs">Cód. da Conta</text>
<text x="93" y="127" font-size="12" textLength="48.0" lengthAdjust="spacingAndGlyphs">Hierarquia</text>
<text x="178" y="127" font-size="12" textLength="33.0" lengthAdjust="spacingAndGlyphs">Código</text>
<text x="242" y="127" font-size="12" textLength="28.0" lengthAdjust="spacingAndGlyphs">Nome</text>
<text x="426" y="127" font-size="12" textLength="48.0" lengthAdjust="spacingAndGlyphs">Descrição</text>
<text x="486" y="127" font-size="12" textLength="28.0" lengthAdjust="spacingAndGlyphs">Saldo</text>
<text x="573" y="127" font-size="12" textLength="33.0" lengthAdjust="spacingAndGlyphs">Inativa</text>
<text x="699" y="127" font-size="12" textLength="60.0" lengthAdjust="spacingAndGlyphs">Conta da RF</text>
<text x="634" y="121" font-size="12" textLength="42.5" lengthAdjust="spacingAndGlyphs">Conta do</text>
<text x="634" y="134" font-size="12" textLength="42.5" lengthAdjust="spacingAndGlyphs">Contador</text>
<rect x="161" y="110" width="1" height="9" fill="#fff"/>
<rect x="159" y="111" width="2" height="1" fill="#fff"/>
<rect x="160" y="112" width="1" height="1" fill="#fff"/>
<path d="M164 117 H172" stroke="#fff" stroke-width="1" fill="none"/>
<rect x="164" y="116" width="1" height="1" fill="#808080"/>
<rect x="165" y="114" width="1" height="1" fill="#808080"/>
<rect x="166" y="112" width="1" height="1" fill="#808080"/>
<rect x="167" y="110" width="1" height="1" fill="#808080"/>
<rect x="167" y="108" width="1" height="1" fill="#808080"/>
<rect x="165" y="115" width="1" height="1" fill="#808080"/>
<rect x="166" y="113" width="1" height="1" fill="#808080"/>
<rect x="168" y="109" width="1" height="2" fill="#fff"/>
<rect x="169" y="111" width="1" height="2" fill="#fff"/>
<rect x="170" y="113" width="1" height="2" fill="#fff"/>
<rect x="171" y="115" width="1" height="2" fill="#fff"/>
<rect x="6" y="141" width="11" height="17" fill="#d4d0c8"/>
<rect x="6" y="141" width="11" height="1" fill="#fff"/>
<rect x="6" y="141" width="1" height="17" fill="#fff"/>
<rect x="6" y="158" width="12" height="1" fill="#000"/>
<rect x="17" y="141" width="1" height="18" fill="#000"/>
<rect x="18" y="141" width="742" height="17" fill="#d1e8ec"/>
<rect x="18" y="158" width="743" height="1" fill="#c0c0c0"/>
<rect x="90" y="141" width="1" height="18" fill="#c0c0c0"/>
<rect x="174" y="141" width="1" height="18" fill="#c0c0c0"/>
<rect x="239" y="141" width="1" height="18" fill="#c0c0c0"/>
<rect x="423" y="141" width="1" height="18" fill="#c0c0c0"/>
<rect x="482" y="141" width="1" height="18" fill="#c0c0c0"/>
<rect x="570" y="141" width="1" height="18" fill="#c0c0c0"/>
<rect x="630" y="141" width="1" height="18" fill="#c0c0c0"/>
<rect x="695" y="141" width="1" height="18" fill="#c0c0c0"/>
<rect x="760" y="141" width="1" height="18" fill="#c0c0c0"/>
<rect x="18" y="141" width="72" height="17" fill="#0a246a"/>
<rect x="18" y="141" width="72" height="1" fill="#000"/>
<rect x="18" y="157" width="72" height="1" fill="#000"/>
<rect x="18" y="141" width="1" height="17" fill="#000"/>
<rect x="89" y="141" width="1" height="17" fill="#000"/>
<rect x="18" y="141" width="1" height="1" fill="#ffe08a"/>
<rect x="18" y="157" width="1" height="1" fill="#ffe08a"/>
<rect x="20" y="141" width="1" height="1" fill="#ffe08a"/>
<rect x="20" y="157" width="1" height="1" fill="#ffe08a"/>
<rect x="22" y="141" width="1" height="1" fill="#ffe08a"/>
<rect x="22" y="157" width="1" height="1" fill="#ffe08a"/>
<rect x="24" y="141" width="1" height="1" fill="#ffe08a"/>
<rect x="24" y="157" width="1" height="1" fill="#ffe08a"/>
<rect x="26" y="141" width="1" height="1" fill="#ffe08a"/>
<rect x="26" y="157" width="1" height="1" fill="#ffe08a"/>
<rect x="28" y="141" width="1" height="1" fill="#ffe08a"/>
<rect x="28" y="157" width="1" height="1" fill="#ffe08a"/>
<rect x="30" y="141" width="1" height="1" fill="#ffe08a"/>
<rect x="30" y="157" width="1" height="1" fill="#ffe08a"/>
<rect x="32" y="141" width="1" height="1" fill="#ffe08a"/>
<rect x="32" y="157" width="1" height="1" fill="#ffe08a"/>
<rect x="34" y="141" width="1" height="1" fill="#ffe08a"/>
<rect x="34" y="157" width="1" height="1" fill="#ffe08a"/>
<rect x="36" y="141" width="1" height="1" fill="#ffe08a"/>
<rect x="36" y="157" width="1" height="1" fill="#ffe08a"/>
<rect x="38" y="141" width="1" height="1" fill="#ffe08a"/>
<rect x="38" y="157" width="1" height="1" fill="#ffe08a"/>
<rect x="40" y="141" width="1" height="1" fill="#ffe08a"/>
<rect x="40" y="157" width="1" height="1" fill="#ffe08a"/>
<rect x="42" y="141" width="1" height="1" fill="#ffe08a"/>
<rect x="42" y="157" width="1" height="1" fill="#ffe08a"/>
<rect x="44" y="141" width="1" height="1" fill="#ffe08a"/>
<rect x="44" y="157" width="1" height="1" fill="#ffe08a"/>
<rect x="46" y="141" width="1" height="1" fill="#ffe08a"/>
<rect x="46" y="157" width="1" height="1" fill="#ffe08a"/>
<rect x="48" y="141" width="1" height="1" fill="#ffe08a"/>
<rect x="48" y="157" width="1" height="1" fill="#ffe08a"/>
<rect x="50" y="141" width="1" height="1" fill="#ffe08a"/>
<rect x="50" y="157" width="1" height="1" fill="#ffe08a"/>
<rect x="52" y="141" width="1" height="1" fill="#ffe08a"/>
<rect x="52" y="157" width="1" height="1" fill="#ffe08a"/>
<rect x="54" y="141" width="1" height="1" fill="#ffe08a"/>
<rect x="54" y="157" width="1" height="1" fill="#ffe08a"/>
<rect x="56" y="141" width="1" height="1" fill="#ffe08a"/>
<rect x="56" y="157" width="1" height="1" fill="#ffe08a"/>
<rect x="58" y="141" width="1" height="1" fill="#ffe08a"/>
<rect x="58" y="157" width="1" height="1" fill="#ffe08a"/>
<rect x="60" y="141" width="1" height="1" fill="#ffe08a"/>
<rect x="60" y="157" width="1" height="1" fill="#ffe08a"/>
<rect x="62" y="141" width="1" height="1" fill="#ffe08a"/>
<rect x="62" y="157" width="1" height="1" fill="#ffe08a"/>
<rect x="64" y="141" width="1" height="1" fill="#ffe08a"/>
<rect x="64" y="157" width="1" height="1" fill="#ffe08a"/>
<rect x="66" y="141" width="1" height="1" fill="#ffe08a"/>
<rect x="66" y="157" width="1" height="1" fill="#ffe08a"/>
<rect x="68" y="141" width="1" height="1" fill="#ffe08a"/>
<rect x="68" y="157" width="1" height="1" fill="#ffe08a"/>
<rect x="70" y="141" width="1" height="1" fill="#ffe08a"/>
<rect x="70" y="157" width="1" height="1" fill="#ffe08a"/>
<rect x="72" y="141" width="1" height="1" fill="#ffe08a"/>
<rect x="72" y="157" width="1" height="1" fill="#ffe08a"/>
<rect x="74" y="141" width="1" height="1" fill="#ffe08a"/>
<rect x="74" y="157" width="1" height="1" fill="#ffe08a"/>
<rect x="76" y="141" width="1" height="1" fill="#ffe08a"/>
<rect x="76" y="157" width="1" height="1" fill="#ffe08a"/>
<rect x="78" y="141" width="1" height="1" fill="#ffe08a"/>
<rect x="78" y="157" width="1" height="1" fill="#ffe08a"/>
<rect x="80" y="141" width="1" height="1" fill="#ffe08a"/>
<rect x="80" y="157" width="1" height="1" fill="#ffe08a"/>
<rect x="82" y="141" width="1" height="1" fill="#ffe08a"/>
<rect x="82" y="157" width="1" height="1" fill="#ffe08a"/>
<rect x="84" y="141" width="1" height="1" fill="#ffe08a"/>
<rect x="84" y="157" width="1" height="1" fill="#ffe08a"/>
<rect x="86" y="141" width="1" height="1" fill="#ffe08a"/>
<rect x="86" y="157" width="1" height="1" fill="#ffe08a"/>
<rect x="88" y="141" width="1" height="1" fill="#ffe08a"/>
<rect x="88" y="157" width="1" height="1" fill="#ffe08a"/>
<rect x="18" y="141" width="1" height="1" fill="#ffe08a"/>
<rect x="89" y="141" width="1" height="1" fill="#ffe08a"/>
<rect x="18" y="143" width="1" height="1" fill="#ffe08a"/>
<rect x="89" y="143" width="1" height="1" fill="#ffe08a"/>
<rect x="18" y="145" width="1" height="1" fill="#ffe08a"/>
<rect x="89" y="145" width="1" height="1" fill="#ffe08a"/>
<rect x="18" y="147" width="1" height="1" fill="#ffe08a"/>
<rect x="89" y="147" width="1" height="1" fill="#ffe08a"/>
<rect x="18" y="149" width="1" height="1" fill="#ffe08a"/>
<rect x="89" y="149" width="1" height="1" fill="#ffe08a"/>
<rect x="18" y="151" width="1" height="1" fill="#ffe08a"/>
<rect x="89" y="151" width="1" height="1" fill="#ffe08a"/>
<rect x="18" y="153" width="1" height="1" fill="#ffe08a"/>
<rect x="89" y="153" width="1" height="1" fill="#ffe08a"/>
<rect x="18" y="155" width="1" height="1" fill="#ffe08a"/>
<rect x="89" y="155" width="1" height="1" fill="#ffe08a"/>
<rect x="18" y="157" width="1" height="1" fill="#ffe08a"/>
<rect x="89" y="157" width="1" height="1" fill="#ffe08a"/>
<text transform="translate(87 154) scale(0.885 1)" font-size="12" fill="#fff" text-anchor="end">205</text>
<text transform="translate(93.5 154) scale(0.885 1)" font-size="12" fill="#000">1</text>
<text transform="translate(242 154) scale(0.9145 1)" font-size="12" fill="#000">ATIVO</text>
<text transform="translate(567 154) scale(0.885 1)" font-size="12" fill="#000" text-anchor="end">987.901,80</text>
<rect x="594" y="143" width="13" height="13" fill="#fff"/>
<rect x="594" y="143" width="12" height="1" fill="#808080"/>
<rect x="594" y="143" width="1" height="12" fill="#808080"/>
<rect x="595" y="144" width="10" height="1" fill="#000"/>
<rect x="595" y="144" width="1" height="10" fill="#000"/>
<rect x="595" y="154" width="11" height="1" fill="#d4d0c8"/>
<rect x="605" y="144" width="1" height="11" fill="#d4d0c8"/>
<path d="M9 144 V155 L15 149.5 Z" fill="#000" shape-rendering="auto"/>
<rect x="9" y="144" width="1" height="11" fill="#000"/>
<rect x="6" y="159" width="11" height="17" fill="#d4d0c8"/>
<rect x="6" y="159" width="11" height="1" fill="#fff"/>
<rect x="6" y="159" width="1" height="17" fill="#fff"/>
<rect x="6" y="176" width="12" height="1" fill="#000"/>
<rect x="17" y="159" width="1" height="18" fill="#000"/>
<rect x="18" y="159" width="742" height="17" fill="#ffffff"/>
<rect x="18" y="176" width="743" height="1" fill="#c0c0c0"/>
<rect x="90" y="159" width="1" height="18" fill="#c0c0c0"/>
<rect x="174" y="159" width="1" height="18" fill="#c0c0c0"/>
<rect x="239" y="159" width="1" height="18" fill="#c0c0c0"/>
<rect x="423" y="159" width="1" height="18" fill="#c0c0c0"/>
<rect x="482" y="159" width="1" height="18" fill="#c0c0c0"/>
<rect x="570" y="159" width="1" height="18" fill="#c0c0c0"/>
<rect x="630" y="159" width="1" height="18" fill="#c0c0c0"/>
<rect x="695" y="159" width="1" height="18" fill="#c0c0c0"/>
<rect x="760" y="159" width="1" height="18" fill="#c0c0c0"/>
<text transform="translate(87 172) scale(0.885 1)" font-size="12" fill="#800000" text-anchor="end">206</text>
<text transform="translate(93.5 172) scale(0.885 1)" font-size="12" fill="#000">1.1</text>
<text transform="translate(242 172) scale(0.885 1)" font-size="12" fill="#000">CIRCULANTE</text>
<text transform="translate(567 172) scale(0.885 1)" font-size="12" fill="#800000" text-anchor="end">465.774,50</text>
<rect x="594" y="161" width="13" height="13" fill="#fff"/>
<rect x="594" y="161" width="12" height="1" fill="#808080"/>
<rect x="594" y="161" width="1" height="12" fill="#808080"/>
<rect x="595" y="162" width="10" height="1" fill="#000"/>
<rect x="595" y="162" width="1" height="10" fill="#000"/>
<rect x="595" y="172" width="11" height="1" fill="#d4d0c8"/>
<rect x="605" y="162" width="1" height="11" fill="#d4d0c8"/>
<rect x="6" y="177" width="11" height="17" fill="#d4d0c8"/>
<rect x="6" y="177" width="11" height="1" fill="#fff"/>
<rect x="6" y="177" width="1" height="17" fill="#fff"/>
<rect x="6" y="194" width="12" height="1" fill="#000"/>
<rect x="17" y="177" width="1" height="18" fill="#000"/>
<rect x="18" y="177" width="742" height="17" fill="#e6e6e6"/>
<rect x="18" y="194" width="743" height="1" fill="#c0c0c0"/>
<rect x="90" y="177" width="1" height="18" fill="#c0c0c0"/>
<rect x="174" y="177" width="1" height="18" fill="#c0c0c0"/>
<rect x="239" y="177" width="1" height="18" fill="#c0c0c0"/>
<rect x="423" y="177" width="1" height="18" fill="#c0c0c0"/>
<rect x="482" y="177" width="1" height="18" fill="#c0c0c0"/>
<rect x="570" y="177" width="1" height="18" fill="#c0c0c0"/>
<rect x="630" y="177" width="1" height="18" fill="#c0c0c0"/>
<rect x="695" y="177" width="1" height="18" fill="#c0c0c0"/>
<rect x="760" y="177" width="1" height="18" fill="#c0c0c0"/>
<text transform="translate(87 190) scale(0.885 1)" font-size="12" fill="#800000" text-anchor="end">207</text>
<text transform="translate(93.5 190) scale(0.885 1)" font-size="12" fill="#000">1.1.1</text>
<text transform="translate(242 190) scale(0.8991 1)" font-size="12" fill="#000">DISPONIVEL</text>
<text transform="translate(567 190) scale(0.885 1)" font-size="12" fill="#800000" text-anchor="end">-433.351,75</text>
<rect x="594" y="179" width="13" height="13" fill="#fff"/>
<rect x="594" y="179" width="12" height="1" fill="#808080"/>
<rect x="594" y="179" width="1" height="12" fill="#808080"/>
<rect x="595" y="180" width="10" height="1" fill="#000"/>
<rect x="595" y="180" width="1" height="10" fill="#000"/>
<rect x="595" y="190" width="11" height="1" fill="#d4d0c8"/>
<rect x="605" y="180" width="1" height="11" fill="#d4d0c8"/>
<rect x="6" y="195" width="11" height="17" fill="#d4d0c8"/>
<rect x="6" y="195" width="11" height="1" fill="#fff"/>
<rect x="6" y="195" width="1" height="17" fill="#fff"/>
<rect x="6" y="212" width="12" height="1" fill="#000"/>
<rect x="17" y="195" width="1" height="18" fill="#000"/>
<rect x="18" y="195" width="742" height="17" fill="#ffffff"/>
<rect x="18" y="212" width="743" height="1" fill="#c0c0c0"/>
<rect x="90" y="195" width="1" height="18" fill="#c0c0c0"/>
<rect x="174" y="195" width="1" height="18" fill="#c0c0c0"/>
<rect x="239" y="195" width="1" height="18" fill="#c0c0c0"/>
<rect x="423" y="195" width="1" height="18" fill="#c0c0c0"/>
<rect x="482" y="195" width="1" height="18" fill="#c0c0c0"/>
<rect x="570" y="195" width="1" height="18" fill="#c0c0c0"/>
<rect x="630" y="195" width="1" height="18" fill="#c0c0c0"/>
<rect x="695" y="195" width="1" height="18" fill="#c0c0c0"/>
<rect x="760" y="195" width="1" height="18" fill="#c0c0c0"/>
<text transform="translate(87 208) scale(0.885 1)" font-size="12" fill="#800000" text-anchor="end">208</text>
<text transform="translate(93.5 208) scale(0.885 1)" font-size="12" fill="#000">1.1.1.01</text>
<text transform="translate(242 208) scale(0.885 1)" font-size="12" fill="#000">CAIXA</text>
<text transform="translate(567 208) scale(0.885 1)" font-size="12" fill="#800000" text-anchor="end">1.142.802,29</text>
<rect x="594" y="197" width="13" height="13" fill="#fff"/>
<rect x="594" y="197" width="12" height="1" fill="#808080"/>
<rect x="594" y="197" width="1" height="12" fill="#808080"/>
<rect x="595" y="198" width="10" height="1" fill="#000"/>
<rect x="595" y="198" width="1" height="10" fill="#000"/>
<rect x="595" y="208" width="11" height="1" fill="#d4d0c8"/>
<rect x="605" y="198" width="1" height="11" fill="#d4d0c8"/>
<rect x="6" y="213" width="11" height="17" fill="#d4d0c8"/>
<rect x="6" y="213" width="11" height="1" fill="#fff"/>
<rect x="6" y="213" width="1" height="17" fill="#fff"/>
<rect x="6" y="230" width="12" height="1" fill="#000"/>
<rect x="17" y="213" width="1" height="18" fill="#000"/>
<rect x="18" y="213" width="742" height="17" fill="#e6e6e6"/>
<rect x="18" y="230" width="743" height="1" fill="#c0c0c0"/>
<rect x="90" y="213" width="1" height="18" fill="#c0c0c0"/>
<rect x="174" y="213" width="1" height="18" fill="#c0c0c0"/>
<rect x="239" y="213" width="1" height="18" fill="#c0c0c0"/>
<rect x="423" y="213" width="1" height="18" fill="#c0c0c0"/>
<rect x="482" y="213" width="1" height="18" fill="#c0c0c0"/>
<rect x="570" y="213" width="1" height="18" fill="#c0c0c0"/>
<rect x="630" y="213" width="1" height="18" fill="#c0c0c0"/>
<rect x="695" y="213" width="1" height="18" fill="#c0c0c0"/>
<rect x="760" y="213" width="1" height="18" fill="#c0c0c0"/>
<text transform="translate(87 226) scale(0.885 1)" font-size="12" fill="#800000" text-anchor="end">209</text>
<text transform="translate(93.5 226) scale(0.885 1)" font-size="12" fill="#000">1.1.1.01.001</text>
<text transform="translate(242 226) scale(0.8689 1)" font-size="12" fill="#000">Caixa Geral</text>
<text transform="translate(567 226) scale(0.885 1)" font-size="12" fill="#800000" text-anchor="end">1.141.912,12</text>
<g clip-path="url(#rfclip)">
<text transform="translate(698.5 226) scale(0.885 1)" font-size="12" fill="#000">1.01.01.01.001</text>
</g>
<rect x="594" y="215" width="13" height="13" fill="#fff"/>
<rect x="594" y="215" width="12" height="1" fill="#808080"/>
<rect x="594" y="215" width="1" height="12" fill="#808080"/>
<rect x="595" y="216" width="10" height="1" fill="#000"/>
<rect x="595" y="216" width="1" height="10" fill="#000"/>
<rect x="595" y="226" width="11" height="1" fill="#d4d0c8"/>
<rect x="605" y="216" width="1" height="11" fill="#d4d0c8"/>
<rect x="6" y="231" width="11" height="17" fill="#d4d0c8"/>
<rect x="6" y="231" width="11" height="1" fill="#fff"/>
<rect x="6" y="231" width="1" height="17" fill="#fff"/>
<rect x="6" y="248" width="12" height="1" fill="#000"/>
<rect x="17" y="231" width="1" height="18" fill="#000"/>
<rect x="18" y="231" width="742" height="17" fill="#ffffff"/>
<rect x="18" y="248" width="743" height="1" fill="#c0c0c0"/>
<rect x="90" y="231" width="1" height="18" fill="#c0c0c0"/>
<rect x="174" y="231" width="1" height="18" fill="#c0c0c0"/>
<rect x="239" y="231" width="1" height="18" fill="#c0c0c0"/>
<rect x="423" y="231" width="1" height="18" fill="#c0c0c0"/>
<rect x="482" y="231" width="1" height="18" fill="#c0c0c0"/>
<rect x="570" y="231" width="1" height="18" fill="#c0c0c0"/>
<rect x="630" y="231" width="1" height="18" fill="#c0c0c0"/>
<rect x="695" y="231" width="1" height="18" fill="#c0c0c0"/>
<rect x="760" y="231" width="1" height="18" fill="#c0c0c0"/>
<text transform="translate(87 244) scale(0.885 1)" font-size="12" fill="#800000" text-anchor="end">210</text>
<text transform="translate(93.5 244) scale(0.885 1)" font-size="12" fill="#000">1.1.1.01.002</text>
<text transform="translate(242 244) scale(0.885 1)" font-size="12" fill="#000">Caixa do PDV 001</text>
<text transform="translate(567 244) scale(0.885 1)" font-size="12" fill="#800000" text-anchor="end">390,20</text>
<g clip-path="url(#rfclip)">
<text transform="translate(698.5 244) scale(0.885 1)" font-size="12" fill="#000">1.01.01.01.002</text>
</g>
<rect x="594" y="233" width="13" height="13" fill="#fff"/>
<rect x="594" y="233" width="12" height="1" fill="#808080"/>
<rect x="594" y="233" width="1" height="12" fill="#808080"/>
<rect x="595" y="234" width="10" height="1" fill="#000"/>
<rect x="595" y="234" width="1" height="10" fill="#000"/>
<rect x="595" y="244" width="11" height="1" fill="#d4d0c8"/>
<rect x="605" y="234" width="1" height="11" fill="#d4d0c8"/>
<rect x="6" y="249" width="11" height="17" fill="#d4d0c8"/>
<rect x="6" y="249" width="11" height="1" fill="#fff"/>
<rect x="6" y="249" width="1" height="17" fill="#fff"/>
<rect x="6" y="266" width="12" height="1" fill="#000"/>
<rect x="17" y="249" width="1" height="18" fill="#000"/>
<rect x="18" y="249" width="742" height="17" fill="#e6e6e6"/>
<rect x="18" y="266" width="743" height="1" fill="#c0c0c0"/>
<rect x="90" y="249" width="1" height="18" fill="#c0c0c0"/>
<rect x="174" y="249" width="1" height="18" fill="#c0c0c0"/>
<rect x="239" y="249" width="1" height="18" fill="#c0c0c0"/>
<rect x="423" y="249" width="1" height="18" fill="#c0c0c0"/>
<rect x="482" y="249" width="1" height="18" fill="#c0c0c0"/>
<rect x="570" y="249" width="1" height="18" fill="#c0c0c0"/>
<rect x="630" y="249" width="1" height="18" fill="#c0c0c0"/>
<rect x="695" y="249" width="1" height="18" fill="#c0c0c0"/>
<rect x="760" y="249" width="1" height="18" fill="#c0c0c0"/>
<text transform="translate(87 262) scale(0.885 1)" font-size="12" fill="#800000" text-anchor="end">211</text>
<text transform="translate(93.5 262) scale(0.885 1)" font-size="12" fill="#000">1.1.1.01.003</text>
<text transform="translate(242 262) scale(0.8953 1)" font-size="12" fill="#000">Caixa do PDV 002</text>
<text transform="translate(567 262) scale(0.885 1)" font-size="12" fill="#800000" text-anchor="end">200,00</text>
<g clip-path="url(#rfclip)">
<text transform="translate(698.5 262) scale(0.885 1)" font-size="12" fill="#000">1.01.01.01.003</text>
</g>
<rect x="594" y="251" width="13" height="13" fill="#fff"/>
<rect x="594" y="251" width="12" height="1" fill="#808080"/>
<rect x="594" y="251" width="1" height="12" fill="#808080"/>
<rect x="595" y="252" width="10" height="1" fill="#000"/>
<rect x="595" y="252" width="1" height="10" fill="#000"/>
<rect x="595" y="262" width="11" height="1" fill="#d4d0c8"/>
<rect x="605" y="252" width="1" height="11" fill="#d4d0c8"/>
<rect x="6" y="267" width="11" height="17" fill="#d4d0c8"/>
<rect x="6" y="267" width="11" height="1" fill="#fff"/>
<rect x="6" y="267" width="1" height="17" fill="#fff"/>
<rect x="6" y="284" width="12" height="1" fill="#000"/>
<rect x="17" y="267" width="1" height="18" fill="#000"/>
<rect x="18" y="267" width="742" height="17" fill="#ffffff"/>
<rect x="18" y="284" width="743" height="1" fill="#c0c0c0"/>
<rect x="90" y="267" width="1" height="18" fill="#c0c0c0"/>
<rect x="174" y="267" width="1" height="18" fill="#c0c0c0"/>
<rect x="239" y="267" width="1" height="18" fill="#c0c0c0"/>
<rect x="423" y="267" width="1" height="18" fill="#c0c0c0"/>
<rect x="482" y="267" width="1" height="18" fill="#c0c0c0"/>
<rect x="570" y="267" width="1" height="18" fill="#c0c0c0"/>
<rect x="630" y="267" width="1" height="18" fill="#c0c0c0"/>
<rect x="695" y="267" width="1" height="18" fill="#c0c0c0"/>
<rect x="760" y="267" width="1" height="18" fill="#c0c0c0"/>
<text transform="translate(87 280) scale(0.885 1)" font-size="12" fill="#800000" text-anchor="end">212</text>
<text transform="translate(93.5 280) scale(0.885 1)" font-size="12" fill="#000">1.1.1.01.004</text>
<text transform="translate(242 280) scale(0.8953 1)" font-size="12" fill="#000">Caixa do PDV 003</text>
<text transform="translate(567 280) scale(0.885 1)" font-size="12" fill="#800000" text-anchor="end">299,97</text>
<g clip-path="url(#rfclip)">
<text transform="translate(698.5 280) scale(0.885 1)" font-size="12" fill="#000">1.01.01.01.004</text>
</g>
<rect x="594" y="269" width="13" height="13" fill="#fff"/>
<rect x="594" y="269" width="12" height="1" fill="#808080"/>
<rect x="594" y="269" width="1" height="12" fill="#808080"/>
<rect x="595" y="270" width="10" height="1" fill="#000"/>
<rect x="595" y="270" width="1" height="10" fill="#000"/>
<rect x="595" y="280" width="11" height="1" fill="#d4d0c8"/>
<rect x="605" y="270" width="1" height="11" fill="#d4d0c8"/>
<rect x="6" y="285" width="11" height="17" fill="#d4d0c8"/>
<rect x="6" y="285" width="11" height="1" fill="#fff"/>
<rect x="6" y="285" width="1" height="17" fill="#fff"/>
<rect x="6" y="302" width="12" height="1" fill="#000"/>
<rect x="17" y="285" width="1" height="18" fill="#000"/>
<rect x="18" y="285" width="742" height="17" fill="#e6e6e6"/>
<rect x="18" y="302" width="743" height="1" fill="#c0c0c0"/>
<rect x="90" y="285" width="1" height="18" fill="#c0c0c0"/>
<rect x="174" y="285" width="1" height="18" fill="#c0c0c0"/>
<rect x="239" y="285" width="1" height="18" fill="#c0c0c0"/>
<rect x="423" y="285" width="1" height="18" fill="#c0c0c0"/>
<rect x="482" y="285" width="1" height="18" fill="#c0c0c0"/>
<rect x="570" y="285" width="1" height="18" fill="#c0c0c0"/>
<rect x="630" y="285" width="1" height="18" fill="#c0c0c0"/>
<rect x="695" y="285" width="1" height="18" fill="#c0c0c0"/>
<rect x="760" y="285" width="1" height="18" fill="#c0c0c0"/>
<text transform="translate(87 298) scale(0.885 1)" font-size="12" fill="#800000" text-anchor="end">432</text>
<text transform="translate(93.5 298) scale(0.885 1)" font-size="12" fill="#000">1.1.1.01.006</text>
<text transform="translate(242 298) scale(0.8953 1)" font-size="12" fill="#000">Caixa do PDV 004</text>
<text transform="translate(567 298) scale(0.885 1)" font-size="12" fill="#800000" text-anchor="end">0,00</text>
<g clip-path="url(#rfclip)">
<text transform="translate(698.5 298) scale(0.885 1)" font-size="12" fill="#000">1.01.01.01.005</text>
</g>
<rect x="594" y="287" width="13" height="13" fill="#fff"/>
<rect x="594" y="287" width="12" height="1" fill="#808080"/>
<rect x="594" y="287" width="1" height="12" fill="#808080"/>
<rect x="595" y="288" width="10" height="1" fill="#000"/>
<rect x="595" y="288" width="1" height="10" fill="#000"/>
<rect x="595" y="298" width="11" height="1" fill="#d4d0c8"/>
<rect x="605" y="288" width="1" height="11" fill="#d4d0c8"/>
<rect x="6" y="303" width="11" height="17" fill="#d4d0c8"/>
<rect x="6" y="303" width="11" height="1" fill="#fff"/>
<rect x="6" y="303" width="1" height="17" fill="#fff"/>
<rect x="6" y="320" width="12" height="1" fill="#000"/>
<rect x="17" y="303" width="1" height="18" fill="#000"/>
<rect x="18" y="303" width="742" height="17" fill="#ffffff"/>
<rect x="18" y="320" width="743" height="1" fill="#c0c0c0"/>
<rect x="90" y="303" width="1" height="18" fill="#c0c0c0"/>
<rect x="174" y="303" width="1" height="18" fill="#c0c0c0"/>
<rect x="239" y="303" width="1" height="18" fill="#c0c0c0"/>
<rect x="423" y="303" width="1" height="18" fill="#c0c0c0"/>
<rect x="482" y="303" width="1" height="18" fill="#c0c0c0"/>
<rect x="570" y="303" width="1" height="18" fill="#c0c0c0"/>
<rect x="630" y="303" width="1" height="18" fill="#c0c0c0"/>
<rect x="695" y="303" width="1" height="18" fill="#c0c0c0"/>
<rect x="760" y="303" width="1" height="18" fill="#c0c0c0"/>
<text transform="translate(87 316) scale(0.885 1)" font-size="12" fill="#800000" text-anchor="end">433</text>
<text transform="translate(93.5 316) scale(0.885 1)" font-size="12" fill="#000">1.1.1.01.007</text>
<text transform="translate(242 316) scale(0.8953 1)" font-size="12" fill="#000">Caixa do PDV 005</text>
<text transform="translate(567 316) scale(0.885 1)" font-size="12" fill="#800000" text-anchor="end">0,00</text>
<g clip-path="url(#rfclip)">
<text transform="translate(698.5 316) scale(0.885 1)" font-size="12" fill="#000">1.01.01.01.006</text>
</g>
<rect x="594" y="305" width="13" height="13" fill="#fff"/>
<rect x="594" y="305" width="12" height="1" fill="#808080"/>
<rect x="594" y="305" width="1" height="12" fill="#808080"/>
<rect x="595" y="306" width="10" height="1" fill="#000"/>
<rect x="595" y="306" width="1" height="10" fill="#000"/>
<rect x="595" y="316" width="11" height="1" fill="#d4d0c8"/>
<rect x="605" y="306" width="1" height="11" fill="#d4d0c8"/>
<rect x="6" y="321" width="11" height="17" fill="#d4d0c8"/>
<rect x="6" y="321" width="11" height="1" fill="#fff"/>
<rect x="6" y="321" width="1" height="17" fill="#fff"/>
<rect x="6" y="338" width="12" height="1" fill="#000"/>
<rect x="17" y="321" width="1" height="18" fill="#000"/>
<rect x="18" y="321" width="742" height="17" fill="#e6e6e6"/>
<rect x="18" y="338" width="743" height="1" fill="#c0c0c0"/>
<rect x="90" y="321" width="1" height="18" fill="#c0c0c0"/>
<rect x="174" y="321" width="1" height="18" fill="#c0c0c0"/>
<rect x="239" y="321" width="1" height="18" fill="#c0c0c0"/>
<rect x="423" y="321" width="1" height="18" fill="#c0c0c0"/>
<rect x="482" y="321" width="1" height="18" fill="#c0c0c0"/>
<rect x="570" y="321" width="1" height="18" fill="#c0c0c0"/>
<rect x="630" y="321" width="1" height="18" fill="#c0c0c0"/>
<rect x="695" y="321" width="1" height="18" fill="#c0c0c0"/>
<rect x="760" y="321" width="1" height="18" fill="#c0c0c0"/>
<text transform="translate(87 334) scale(0.885 1)" font-size="12" fill="#800000" text-anchor="end">214</text>
<text transform="translate(93.5 334) scale(0.885 1)" font-size="12" fill="#000">1.1.1.02</text>
<text transform="translate(242 334) scale(0.8911 1)" font-size="12" fill="#000">BANCO CONTA MOVIMENTO</text>
<text transform="translate(567 334) scale(0.885 1)" font-size="12" fill="#800000" text-anchor="end">-1.578.663,40</text>
<rect x="594" y="323" width="13" height="13" fill="#fff"/>
<rect x="594" y="323" width="12" height="1" fill="#808080"/>
<rect x="594" y="323" width="1" height="12" fill="#808080"/>
<rect x="595" y="324" width="10" height="1" fill="#000"/>
<rect x="595" y="324" width="1" height="10" fill="#000"/>
<rect x="595" y="334" width="11" height="1" fill="#d4d0c8"/>
<rect x="605" y="324" width="1" height="11" fill="#d4d0c8"/>
<rect x="6" y="339" width="11" height="17" fill="#d4d0c8"/>
<rect x="6" y="339" width="11" height="1" fill="#fff"/>
<rect x="6" y="339" width="1" height="17" fill="#fff"/>
<rect x="6" y="356" width="12" height="1" fill="#000"/>
<rect x="17" y="339" width="1" height="18" fill="#000"/>
<rect x="18" y="339" width="742" height="17" fill="#ffffff"/>
<rect x="18" y="356" width="743" height="1" fill="#c0c0c0"/>
<rect x="90" y="339" width="1" height="18" fill="#c0c0c0"/>
<rect x="174" y="339" width="1" height="18" fill="#c0c0c0"/>
<rect x="239" y="339" width="1" height="18" fill="#c0c0c0"/>
<rect x="423" y="339" width="1" height="18" fill="#c0c0c0"/>
<rect x="482" y="339" width="1" height="18" fill="#c0c0c0"/>
<rect x="570" y="339" width="1" height="18" fill="#c0c0c0"/>
<rect x="630" y="339" width="1" height="18" fill="#c0c0c0"/>
<rect x="695" y="339" width="1" height="18" fill="#c0c0c0"/>
<rect x="760" y="339" width="1" height="18" fill="#c0c0c0"/>
<text transform="translate(87 352) scale(0.885 1)" font-size="12" fill="#800000" text-anchor="end">215</text>
<text transform="translate(93.5 352) scale(0.885 1)" font-size="12" fill="#000">1.1.1.02.001</text>
<text transform="translate(242 352) scale(0.885 1)" font-size="12" fill="#000">Caixa Economica Federal</text>
<text transform="translate(567 352) scale(0.885 1)" font-size="12" fill="#800000" text-anchor="end">10,01</text>
<g clip-path="url(#rfclip)">
<text transform="translate(698.5 352) scale(0.885 1)" font-size="12" fill="#000">1.01.01.02.001</text>
</g>
<rect x="594" y="341" width="13" height="13" fill="#fff"/>
<rect x="594" y="341" width="12" height="1" fill="#808080"/>
<rect x="594" y="341" width="1" height="12" fill="#808080"/>
<rect x="595" y="342" width="10" height="1" fill="#000"/>
<rect x="595" y="342" width="1" height="10" fill="#000"/>
<rect x="595" y="352" width="11" height="1" fill="#d4d0c8"/>
<rect x="605" y="342" width="1" height="11" fill="#d4d0c8"/>
<rect x="6" y="357" width="11" height="17" fill="#d4d0c8"/>
<rect x="6" y="357" width="11" height="1" fill="#fff"/>
<rect x="6" y="357" width="1" height="17" fill="#fff"/>
<rect x="6" y="374" width="12" height="1" fill="#000"/>
<rect x="17" y="357" width="1" height="18" fill="#000"/>
<rect x="18" y="357" width="742" height="17" fill="#e6e6e6"/>
<rect x="18" y="374" width="743" height="1" fill="#c0c0c0"/>
<rect x="90" y="357" width="1" height="18" fill="#c0c0c0"/>
<rect x="174" y="357" width="1" height="18" fill="#c0c0c0"/>
<rect x="239" y="357" width="1" height="18" fill="#c0c0c0"/>
<rect x="423" y="357" width="1" height="18" fill="#c0c0c0"/>
<rect x="482" y="357" width="1" height="18" fill="#c0c0c0"/>
<rect x="570" y="357" width="1" height="18" fill="#c0c0c0"/>
<rect x="630" y="357" width="1" height="18" fill="#c0c0c0"/>
<rect x="695" y="357" width="1" height="18" fill="#c0c0c0"/>
<rect x="760" y="357" width="1" height="18" fill="#c0c0c0"/>
<text transform="translate(87 370) scale(0.885 1)" font-size="12" fill="#800000" text-anchor="end">216</text>
<text transform="translate(93.5 370) scale(0.885 1)" font-size="12" fill="#000">1.1.1.02.002</text>
<text transform="translate(242 370) scale(0.9136 1)" font-size="12" fill="#000">Banco do Brasil S/A</text>
<text transform="translate(567 370) scale(0.885 1)" font-size="12" fill="#800000" text-anchor="end">-69.816,94</text>
<g clip-path="url(#rfclip)">
<text transform="translate(698.5 370) scale(0.885 1)" font-size="12" fill="#000">1.01.01.02.002</text>
</g>
<rect x="594" y="359" width="13" height="13" fill="#fff"/>
<rect x="594" y="359" width="12" height="1" fill="#808080"/>
<rect x="594" y="359" width="1" height="12" fill="#808080"/>
<rect x="595" y="360" width="10" height="1" fill="#000"/>
<rect x="595" y="360" width="1" height="10" fill="#000"/>
<rect x="595" y="370" width="11" height="1" fill="#d4d0c8"/>
<rect x="605" y="360" width="1" height="11" fill="#d4d0c8"/>
<rect x="6" y="375" width="11" height="17" fill="#d4d0c8"/>
<rect x="6" y="375" width="11" height="1" fill="#fff"/>
<rect x="6" y="375" width="1" height="17" fill="#fff"/>
<rect x="6" y="392" width="12" height="1" fill="#000"/>
<rect x="17" y="375" width="1" height="18" fill="#000"/>
<rect x="18" y="375" width="742" height="17" fill="#ffffff"/>
<rect x="18" y="392" width="743" height="1" fill="#c0c0c0"/>
<rect x="90" y="375" width="1" height="18" fill="#c0c0c0"/>
<rect x="174" y="375" width="1" height="18" fill="#c0c0c0"/>
<rect x="239" y="375" width="1" height="18" fill="#c0c0c0"/>
<rect x="423" y="375" width="1" height="18" fill="#c0c0c0"/>
<rect x="482" y="375" width="1" height="18" fill="#c0c0c0"/>
<rect x="570" y="375" width="1" height="18" fill="#c0c0c0"/>
<rect x="630" y="375" width="1" height="18" fill="#c0c0c0"/>
<rect x="695" y="375" width="1" height="18" fill="#c0c0c0"/>
<rect x="760" y="375" width="1" height="18" fill="#c0c0c0"/>
<text transform="translate(87 388) scale(0.885 1)" font-size="12" fill="#800000" text-anchor="end">403</text>
<text transform="translate(93.5 388) scale(0.885 1)" font-size="12" fill="#000">1.1.1.02.003</text>
<text transform="translate(242 388) scale(0.9051 1)" font-size="12" fill="#000">Banco Bradesco S/A 1266-1</text>
<text transform="translate(567 388) scale(0.885 1)" font-size="12" fill="#800000" text-anchor="end">0,00</text>
<g clip-path="url(#rfclip)">
<text transform="translate(698.5 388) scale(0.885 1)" font-size="12" fill="#000">1.01.01.02.003</text>
</g>
<rect x="594" y="377" width="13" height="13" fill="#fff"/>
<rect x="594" y="377" width="12" height="1" fill="#808080"/>
<rect x="594" y="377" width="1" height="12" fill="#808080"/>
<rect x="595" y="378" width="10" height="1" fill="#000"/>
<rect x="595" y="378" width="1" height="10" fill="#000"/>
<rect x="595" y="388" width="11" height="1" fill="#d4d0c8"/>
<rect x="605" y="378" width="1" height="11" fill="#d4d0c8"/>
<rect x="6" y="393" width="11" height="17" fill="#d4d0c8"/>
<rect x="6" y="393" width="11" height="1" fill="#fff"/>
<rect x="6" y="393" width="1" height="17" fill="#fff"/>
<rect x="6" y="410" width="12" height="1" fill="#000"/>
<rect x="17" y="393" width="1" height="18" fill="#000"/>
<rect x="18" y="393" width="742" height="17" fill="#e6e6e6"/>
<rect x="18" y="410" width="743" height="1" fill="#c0c0c0"/>
<rect x="90" y="393" width="1" height="18" fill="#c0c0c0"/>
<rect x="174" y="393" width="1" height="18" fill="#c0c0c0"/>
<rect x="239" y="393" width="1" height="18" fill="#c0c0c0"/>
<rect x="423" y="393" width="1" height="18" fill="#c0c0c0"/>
<rect x="482" y="393" width="1" height="18" fill="#c0c0c0"/>
<rect x="570" y="393" width="1" height="18" fill="#c0c0c0"/>
<rect x="630" y="393" width="1" height="18" fill="#c0c0c0"/>
<rect x="695" y="393" width="1" height="18" fill="#c0c0c0"/>
<rect x="760" y="393" width="1" height="18" fill="#c0c0c0"/>
<text transform="translate(87 406) scale(0.885 1)" font-size="12" fill="#800000" text-anchor="end">404</text>
<text transform="translate(93.5 406) scale(0.885 1)" font-size="12" fill="#000">1.1.1.02.004</text>
<text transform="translate(242 406) scale(0.917 1)" font-size="12" fill="#000">Banco Bradesco S/A 31876-0</text>
<text transform="translate(567 406) scale(0.885 1)" font-size="12" fill="#800000" text-anchor="end">265,50</text>
<g clip-path="url(#rfclip)">
<text transform="translate(698.5 406) scale(0.885 1)" font-size="12" fill="#000">1.01.01.02.004</text>
</g>
<rect x="594" y="395" width="13" height="13" fill="#fff"/>
<rect x="594" y="395" width="12" height="1" fill="#808080"/>
<rect x="594" y="395" width="1" height="12" fill="#808080"/>
<rect x="595" y="396" width="10" height="1" fill="#000"/>
<rect x="595" y="396" width="1" height="10" fill="#000"/>
<rect x="595" y="406" width="11" height="1" fill="#d4d0c8"/>
<rect x="605" y="396" width="1" height="11" fill="#d4d0c8"/>
<rect x="6" y="411" width="11" height="17" fill="#d4d0c8"/>
<rect x="6" y="411" width="11" height="1" fill="#fff"/>
<rect x="6" y="411" width="1" height="17" fill="#fff"/>
<rect x="6" y="428" width="12" height="1" fill="#000"/>
<rect x="17" y="411" width="1" height="18" fill="#000"/>
<rect x="18" y="411" width="742" height="17" fill="#ffffff"/>
<rect x="18" y="428" width="743" height="1" fill="#c0c0c0"/>
<rect x="90" y="411" width="1" height="18" fill="#c0c0c0"/>
<rect x="174" y="411" width="1" height="18" fill="#c0c0c0"/>
<rect x="239" y="411" width="1" height="18" fill="#c0c0c0"/>
<rect x="423" y="411" width="1" height="18" fill="#c0c0c0"/>
<rect x="482" y="411" width="1" height="18" fill="#c0c0c0"/>
<rect x="570" y="411" width="1" height="18" fill="#c0c0c0"/>
<rect x="630" y="411" width="1" height="18" fill="#c0c0c0"/>
<rect x="695" y="411" width="1" height="18" fill="#c0c0c0"/>
<rect x="760" y="411" width="1" height="18" fill="#c0c0c0"/>
<text transform="translate(87 424) scale(0.885 1)" font-size="12" fill="#800000" text-anchor="end">405</text>
<text transform="translate(93.5 424) scale(0.885 1)" font-size="12" fill="#000">1.1.1.02.005</text>
<text transform="translate(242 424) scale(0.885 1)" font-size="12" fill="#000">SICOOB 16.133001-0</text>
<text transform="translate(567 424) scale(0.885 1)" font-size="12" fill="#800000" text-anchor="end">-1.509.121,97</text>
<g clip-path="url(#rfclip)">
<text transform="translate(698.5 424) scale(0.885 1)" font-size="12" fill="#000">1.01.01.02.005</text>
</g>
<rect x="594" y="413" width="13" height="13" fill="#fff"/>
<rect x="594" y="413" width="12" height="1" fill="#808080"/>
<rect x="594" y="413" width="1" height="12" fill="#808080"/>
<rect x="595" y="414" width="10" height="1" fill="#000"/>
<rect x="595" y="414" width="1" height="10" fill="#000"/>
<rect x="595" y="424" width="11" height="1" fill="#d4d0c8"/>
<rect x="605" y="414" width="1" height="11" fill="#d4d0c8"/>
<rect x="6" y="429" width="11" height="17" fill="#d4d0c8"/>
<rect x="6" y="429" width="11" height="1" fill="#fff"/>
<rect x="6" y="429" width="1" height="17" fill="#fff"/>
<rect x="6" y="446" width="12" height="1" fill="#000"/>
<rect x="17" y="429" width="1" height="18" fill="#000"/>
<rect x="18" y="429" width="742" height="17" fill="#e6e6e6"/>
<rect x="18" y="446" width="743" height="1" fill="#c0c0c0"/>
<rect x="90" y="429" width="1" height="18" fill="#c0c0c0"/>
<rect x="174" y="429" width="1" height="18" fill="#c0c0c0"/>
<rect x="239" y="429" width="1" height="18" fill="#c0c0c0"/>
<rect x="423" y="429" width="1" height="18" fill="#c0c0c0"/>
<rect x="482" y="429" width="1" height="18" fill="#c0c0c0"/>
<rect x="570" y="429" width="1" height="18" fill="#c0c0c0"/>
<rect x="630" y="429" width="1" height="18" fill="#c0c0c0"/>
<rect x="695" y="429" width="1" height="18" fill="#c0c0c0"/>
<rect x="760" y="429" width="1" height="18" fill="#c0c0c0"/>
<text transform="translate(87 442) scale(0.885 1)" font-size="12" fill="#800000" text-anchor="end">217</text>
<text transform="translate(93.5 442) scale(0.885 1)" font-size="12" fill="#000">1.1.1.03</text>
<text transform="translate(242 442) scale(0.8724 1)" font-size="12" fill="#000">APLICACOES FINANCEIRAS</text>
<text transform="translate(567 442) scale(0.885 1)" font-size="12" fill="#800000" text-anchor="end">2.509,36</text>
<rect x="594" y="431" width="13" height="13" fill="#fff"/>
<rect x="594" y="431" width="12" height="1" fill="#808080"/>
<rect x="594" y="431" width="1" height="12" fill="#808080"/>
<rect x="595" y="432" width="10" height="1" fill="#000"/>
<rect x="595" y="432" width="1" height="10" fill="#000"/>
<rect x="595" y="442" width="11" height="1" fill="#d4d0c8"/>
<rect x="605" y="432" width="1" height="11" fill="#d4d0c8"/>
<rect x="6" y="447" width="11" height="17" fill="#d4d0c8"/>
<rect x="6" y="447" width="11" height="1" fill="#fff"/>
<rect x="6" y="447" width="1" height="17" fill="#fff"/>
<rect x="6" y="464" width="12" height="1" fill="#000"/>
<rect x="17" y="447" width="1" height="18" fill="#000"/>
<rect x="18" y="447" width="742" height="17" fill="#ffffff"/>
<rect x="18" y="464" width="743" height="1" fill="#c0c0c0"/>
<rect x="90" y="447" width="1" height="18" fill="#c0c0c0"/>
<rect x="174" y="447" width="1" height="18" fill="#c0c0c0"/>
<rect x="239" y="447" width="1" height="18" fill="#c0c0c0"/>
<rect x="423" y="447" width="1" height="18" fill="#c0c0c0"/>
<rect x="482" y="447" width="1" height="18" fill="#c0c0c0"/>
<rect x="570" y="447" width="1" height="18" fill="#c0c0c0"/>
<rect x="630" y="447" width="1" height="18" fill="#c0c0c0"/>
<rect x="695" y="447" width="1" height="18" fill="#c0c0c0"/>
<rect x="760" y="447" width="1" height="18" fill="#c0c0c0"/>
<text transform="translate(87 460) scale(0.885 1)" font-size="12" fill="#800000" text-anchor="end">218</text>
<text transform="translate(93.5 460) scale(0.885 1)" font-size="12" fill="#000">1.1.1.03.001</text>
<text transform="translate(242 460) scale(0.885 1)" font-size="12" fill="#000">Caixa Economica Federal</text>
<text transform="translate(567 460) scale(0.885 1)" font-size="12" fill="#800000" text-anchor="end">0,00</text>
<g clip-path="url(#rfclip)">
<text transform="translate(698.5 460) scale(0.885 1)" font-size="12" fill="#000">1.01.01.07.01</text>
</g>
<rect x="594" y="449" width="13" height="13" fill="#fff"/>
<rect x="594" y="449" width="12" height="1" fill="#808080"/>
<rect x="594" y="449" width="1" height="12" fill="#808080"/>
<rect x="595" y="450" width="10" height="1" fill="#000"/>
<rect x="595" y="450" width="1" height="10" fill="#000"/>
<rect x="595" y="460" width="11" height="1" fill="#d4d0c8"/>
<rect x="605" y="450" width="1" height="11" fill="#d4d0c8"/>
<rect x="6" y="465" width="11" height="17" fill="#d4d0c8"/>
<rect x="6" y="465" width="11" height="1" fill="#fff"/>
<rect x="6" y="465" width="1" height="17" fill="#fff"/>
<rect x="6" y="482" width="12" height="1" fill="#000"/>
<rect x="17" y="465" width="1" height="18" fill="#000"/>
<rect x="18" y="465" width="742" height="17" fill="#e6e6e6"/>
<rect x="18" y="482" width="743" height="1" fill="#c0c0c0"/>
<rect x="90" y="465" width="1" height="18" fill="#c0c0c0"/>
<rect x="174" y="465" width="1" height="18" fill="#c0c0c0"/>
<rect x="239" y="465" width="1" height="18" fill="#c0c0c0"/>
<rect x="423" y="465" width="1" height="18" fill="#c0c0c0"/>
<rect x="482" y="465" width="1" height="18" fill="#c0c0c0"/>
<rect x="570" y="465" width="1" height="18" fill="#c0c0c0"/>
<rect x="630" y="465" width="1" height="18" fill="#c0c0c0"/>
<rect x="695" y="465" width="1" height="18" fill="#c0c0c0"/>
<rect x="760" y="465" width="1" height="18" fill="#c0c0c0"/>
<text transform="translate(87 478) scale(0.885 1)" font-size="12" fill="#800000" text-anchor="end">219</text>
<text transform="translate(93.5 478) scale(0.885 1)" font-size="12" fill="#000">1.1.1.03.002</text>
<text transform="translate(242 478) scale(0.9136 1)" font-size="12" fill="#000">Banco do Brasil S/A</text>
<text transform="translate(567 478) scale(0.885 1)" font-size="12" fill="#800000" text-anchor="end">0,00</text>
<g clip-path="url(#rfclip)">
<text transform="translate(698.5 478) scale(0.885 1)" font-size="12" fill="#000">1.01.01.07.01</text>
</g>
<rect x="594" y="467" width="13" height="13" fill="#fff"/>
<rect x="594" y="467" width="12" height="1" fill="#808080"/>
<rect x="594" y="467" width="1" height="12" fill="#808080"/>
<rect x="595" y="468" width="10" height="1" fill="#000"/>
<rect x="595" y="468" width="1" height="10" fill="#000"/>
<rect x="595" y="478" width="11" height="1" fill="#d4d0c8"/>
<rect x="605" y="468" width="1" height="11" fill="#d4d0c8"/>
<rect x="6" y="483" width="11" height="17" fill="#d4d0c8"/>
<rect x="6" y="483" width="11" height="1" fill="#fff"/>
<rect x="6" y="483" width="1" height="17" fill="#fff"/>
<rect x="6" y="500" width="12" height="1" fill="#000"/>
<rect x="17" y="483" width="1" height="18" fill="#000"/>
<rect x="18" y="483" width="742" height="17" fill="#ffffff"/>
<rect x="18" y="500" width="743" height="1" fill="#c0c0c0"/>
<rect x="90" y="483" width="1" height="18" fill="#c0c0c0"/>
<rect x="174" y="483" width="1" height="18" fill="#c0c0c0"/>
<rect x="239" y="483" width="1" height="18" fill="#c0c0c0"/>
<rect x="423" y="483" width="1" height="18" fill="#c0c0c0"/>
<rect x="482" y="483" width="1" height="18" fill="#c0c0c0"/>
<rect x="570" y="483" width="1" height="18" fill="#c0c0c0"/>
<rect x="630" y="483" width="1" height="18" fill="#c0c0c0"/>
<rect x="695" y="483" width="1" height="18" fill="#c0c0c0"/>
<rect x="760" y="483" width="1" height="18" fill="#c0c0c0"/>
<text transform="translate(87 496) scale(0.885 1)" font-size="12" fill="#800000" text-anchor="end">451</text>
<text transform="translate(93.5 496) scale(0.885 1)" font-size="12" fill="#000">1.1.1.03.003</text>
<text transform="translate(242 496) scale(0.885 1)" font-size="12" fill="#000">Sicoob Coopemata</text>
<text transform="translate(567 496) scale(0.885 1)" font-size="12" fill="#800000" text-anchor="end">2.509,36</text>
<rect x="594" y="485" width="13" height="13" fill="#fff"/>
<rect x="594" y="485" width="12" height="1" fill="#808080"/>
<rect x="594" y="485" width="1" height="12" fill="#808080"/>
<rect x="595" y="486" width="10" height="1" fill="#000"/>
<rect x="595" y="486" width="1" height="10" fill="#000"/>
<rect x="595" y="496" width="11" height="1" fill="#d4d0c8"/>
<rect x="605" y="486" width="1" height="11" fill="#d4d0c8"/>
<rect x="6" y="501" width="11" height="17" fill="#d4d0c8"/>
<rect x="6" y="501" width="11" height="1" fill="#fff"/>
<rect x="6" y="501" width="1" height="17" fill="#fff"/>
<rect x="6" y="518" width="12" height="1" fill="#000"/>
<rect x="17" y="501" width="1" height="18" fill="#000"/>
<rect x="18" y="501" width="742" height="17" fill="#e6e6e6"/>
<rect x="18" y="518" width="743" height="1" fill="#c0c0c0"/>
<rect x="90" y="501" width="1" height="18" fill="#c0c0c0"/>
<rect x="174" y="501" width="1" height="18" fill="#c0c0c0"/>
<rect x="239" y="501" width="1" height="18" fill="#c0c0c0"/>
<rect x="423" y="501" width="1" height="18" fill="#c0c0c0"/>
<rect x="482" y="501" width="1" height="18" fill="#c0c0c0"/>
<rect x="570" y="501" width="1" height="18" fill="#c0c0c0"/>
<rect x="630" y="501" width="1" height="18" fill="#c0c0c0"/>
<rect x="695" y="501" width="1" height="18" fill="#c0c0c0"/>
<rect x="760" y="501" width="1" height="18" fill="#c0c0c0"/>
<text transform="translate(87 514) scale(0.885 1)" font-size="12" fill="#800000" text-anchor="end">220</text>
<text transform="translate(93.5 514) scale(0.885 1)" font-size="12" fill="#000">1.1.2</text>
<text transform="translate(242 514) scale(0.9143 1)" font-size="12" fill="#000">REALIZAVEL A CURTO PRAZO</text>
<text transform="translate(567 514) scale(0.885 1)" font-size="12" fill="#800000" text-anchor="end">899.126,25</text>
<rect x="594" y="503" width="13" height="13" fill="#fff"/>
<rect x="594" y="503" width="12" height="1" fill="#808080"/>
<rect x="594" y="503" width="1" height="12" fill="#808080"/>
<rect x="595" y="504" width="10" height="1" fill="#000"/>
<rect x="595" y="504" width="1" height="10" fill="#000"/>
<rect x="595" y="514" width="11" height="1" fill="#d4d0c8"/>
<rect x="605" y="504" width="1" height="11" fill="#d4d0c8"/>
<rect x="6" y="519" width="11" height="17" fill="#d4d0c8"/>
<rect x="6" y="519" width="11" height="1" fill="#fff"/>
<rect x="6" y="519" width="1" height="17" fill="#fff"/>
<rect x="6" y="536" width="12" height="1" fill="#000"/>
<rect x="17" y="519" width="1" height="18" fill="#000"/>
<rect x="18" y="519" width="742" height="17" fill="#ffffff"/>
<rect x="18" y="536" width="743" height="1" fill="#c0c0c0"/>
<rect x="90" y="519" width="1" height="18" fill="#c0c0c0"/>
<rect x="174" y="519" width="1" height="18" fill="#c0c0c0"/>
<rect x="239" y="519" width="1" height="18" fill="#c0c0c0"/>
<rect x="423" y="519" width="1" height="18" fill="#c0c0c0"/>
<rect x="482" y="519" width="1" height="18" fill="#c0c0c0"/>
<rect x="570" y="519" width="1" height="18" fill="#c0c0c0"/>
<rect x="630" y="519" width="1" height="18" fill="#c0c0c0"/>
<rect x="695" y="519" width="1" height="18" fill="#c0c0c0"/>
<rect x="760" y="519" width="1" height="18" fill="#c0c0c0"/>
<text transform="translate(87 532) scale(0.885 1)" font-size="12" fill="#800000" text-anchor="end">221</text>
<text transform="translate(93.5 532) scale(0.885 1)" font-size="12" fill="#000">1.1.2.01</text>
<text transform="translate(242 532) scale(0.885 1)" font-size="12" fill="#000">CLIENTES</text>
<text transform="translate(567 532) scale(0.885 1)" font-size="12" fill="#800000" text-anchor="end">599.907,16</text>
<rect x="594" y="521" width="13" height="13" fill="#fff"/>
<rect x="594" y="521" width="12" height="1" fill="#808080"/>
<rect x="594" y="521" width="1" height="12" fill="#808080"/>
<rect x="595" y="522" width="10" height="1" fill="#000"/>
<rect x="595" y="522" width="1" height="10" fill="#000"/>
<rect x="595" y="532" width="11" height="1" fill="#d4d0c8"/>
<rect x="605" y="522" width="1" height="11" fill="#d4d0c8"/>
<rect x="6" y="537" width="11" height="17" fill="#d4d0c8"/>
<rect x="6" y="537" width="11" height="1" fill="#fff"/>
<rect x="6" y="537" width="1" height="17" fill="#fff"/>
<rect x="6" y="554" width="12" height="1" fill="#000"/>
<rect x="17" y="537" width="1" height="18" fill="#000"/>
<rect x="18" y="537" width="742" height="17" fill="#e6e6e6"/>
<rect x="18" y="554" width="743" height="1" fill="#c0c0c0"/>
<rect x="90" y="537" width="1" height="18" fill="#c0c0c0"/>
<rect x="174" y="537" width="1" height="18" fill="#c0c0c0"/>
<rect x="239" y="537" width="1" height="18" fill="#c0c0c0"/>
<rect x="423" y="537" width="1" height="18" fill="#c0c0c0"/>
<rect x="482" y="537" width="1" height="18" fill="#c0c0c0"/>
<rect x="570" y="537" width="1" height="18" fill="#c0c0c0"/>
<rect x="630" y="537" width="1" height="18" fill="#c0c0c0"/>
<rect x="695" y="537" width="1" height="18" fill="#c0c0c0"/>
<rect x="760" y="537" width="1" height="18" fill="#c0c0c0"/>
<text transform="translate(87 550) scale(0.885 1)" font-size="12" fill="#800000" text-anchor="end">222</text>
<text transform="translate(93.5 550) scale(0.885 1)" font-size="12" fill="#000">1.1.2.01.001</text>
<text transform="translate(242 550) scale(0.9066 1)" font-size="12" fill="#000">Vendas Convenio</text>
<text transform="translate(567 550) scale(0.885 1)" font-size="12" fill="#800000" text-anchor="end">66.306,44</text>
<g clip-path="url(#rfclip)">
<text transform="translate(698.5 550) scale(0.885 1)" font-size="12" fill="#000">1.01.05.02.001</text>
</g>
<rect x="594" y="539" width="13" height="13" fill="#fff"/>
<rect x="594" y="539" width="12" height="1" fill="#808080"/>
<rect x="594" y="539" width="1" height="12" fill="#808080"/>
<rect x="595" y="540" width="10" height="1" fill="#000"/>
<rect x="595" y="540" width="1" height="10" fill="#000"/>
<rect x="595" y="550" width="11" height="1" fill="#d4d0c8"/>
<rect x="605" y="540" width="1" height="11" fill="#d4d0c8"/>
<rect x="6" y="555" width="11" height="17" fill="#d4d0c8"/>
<rect x="6" y="555" width="11" height="1" fill="#fff"/>
<rect x="6" y="555" width="1" height="17" fill="#fff"/>
<rect x="6" y="572" width="12" height="1" fill="#000"/>
<rect x="17" y="555" width="1" height="18" fill="#000"/>
<rect x="18" y="555" width="742" height="17" fill="#ffffff"/>
<rect x="18" y="572" width="743" height="1" fill="#c0c0c0"/>
<rect x="90" y="555" width="1" height="18" fill="#c0c0c0"/>
<rect x="174" y="555" width="1" height="18" fill="#c0c0c0"/>
<rect x="239" y="555" width="1" height="18" fill="#c0c0c0"/>
<rect x="423" y="555" width="1" height="18" fill="#c0c0c0"/>
<rect x="482" y="555" width="1" height="18" fill="#c0c0c0"/>
<rect x="570" y="555" width="1" height="18" fill="#c0c0c0"/>
<rect x="630" y="555" width="1" height="18" fill="#c0c0c0"/>
<rect x="695" y="555" width="1" height="18" fill="#c0c0c0"/>
<rect x="760" y="555" width="1" height="18" fill="#c0c0c0"/>
<text transform="translate(87 568) scale(0.885 1)" font-size="12" fill="#800000" text-anchor="end">223</text>
<text transform="translate(93.5 568) scale(0.885 1)" font-size="12" fill="#000">1.1.2.01.002</text>
<text transform="translate(242 568) scale(0.9108 1)" font-size="12" fill="#000">Cartao de Credito / Ticket a Receber</text>
<text transform="translate(567 568) scale(0.885 1)" font-size="12" fill="#800000" text-anchor="end">201.433,77</text>
<g clip-path="url(#rfclip)">
<text transform="translate(698.5 568) scale(0.885 1)" font-size="12" fill="#000">1.01.05.02.002</text>
</g>
<rect x="594" y="557" width="13" height="13" fill="#fff"/>
<rect x="594" y="557" width="12" height="1" fill="#808080"/>
<rect x="594" y="557" width="1" height="12" fill="#808080"/>
<rect x="595" y="558" width="10" height="1" fill="#000"/>
<rect x="595" y="558" width="1" height="10" fill="#000"/>
<rect x="595" y="568" width="11" height="1" fill="#d4d0c8"/>
<rect x="605" y="558" width="1" height="11" fill="#d4d0c8"/>
<rect x="6" y="573" width="11" height="17" fill="#d4d0c8"/>
<rect x="6" y="573" width="11" height="1" fill="#fff"/>
<rect x="6" y="573" width="1" height="17" fill="#fff"/>
<rect x="6" y="590" width="12" height="1" fill="#000"/>
<rect x="17" y="573" width="1" height="18" fill="#000"/>
<rect x="18" y="573" width="742" height="17" fill="#e6e6e6"/>
<rect x="18" y="590" width="743" height="1" fill="#c0c0c0"/>
<rect x="90" y="573" width="1" height="18" fill="#c0c0c0"/>
<rect x="174" y="573" width="1" height="18" fill="#c0c0c0"/>
<rect x="239" y="573" width="1" height="18" fill="#c0c0c0"/>
<rect x="423" y="573" width="1" height="18" fill="#c0c0c0"/>
<rect x="482" y="573" width="1" height="18" fill="#c0c0c0"/>
<rect x="570" y="573" width="1" height="18" fill="#c0c0c0"/>
<rect x="630" y="573" width="1" height="18" fill="#c0c0c0"/>
<rect x="695" y="573" width="1" height="18" fill="#c0c0c0"/>
<rect x="760" y="573" width="1" height="18" fill="#c0c0c0"/>
<text transform="translate(87 586) scale(0.885 1)" font-size="12" fill="#800000" text-anchor="end">224</text>
<text transform="translate(93.5 586) scale(0.885 1)" font-size="12" fill="#000">1.1.2.01.003</text>
<text transform="translate(242 586) scale(0.8944 1)" font-size="12" fill="#000">Cheques a Receber</text>
<text transform="translate(567 586) scale(0.885 1)" font-size="12" fill="#800000" text-anchor="end">332.166,95</text>
<g clip-path="url(#rfclip)">
<text transform="translate(698.5 586) scale(0.885 1)" font-size="12" fill="#000">1.01.05.02.003</text>
</g>
<rect x="594" y="575" width="13" height="13" fill="#fff"/>
<rect x="594" y="575" width="12" height="1" fill="#808080"/>
<rect x="594" y="575" width="1" height="12" fill="#808080"/>
<rect x="595" y="576" width="10" height="1" fill="#000"/>
<rect x="595" y="576" width="1" height="10" fill="#000"/>
<rect x="595" y="586" width="11" height="1" fill="#d4d0c8"/>
<rect x="605" y="576" width="1" height="11" fill="#d4d0c8"/>
<rect x="6" y="591" width="11" height="17" fill="#d4d0c8"/>
<rect x="6" y="591" width="11" height="1" fill="#fff"/>
<rect x="6" y="591" width="1" height="17" fill="#fff"/>
<rect x="6" y="608" width="12" height="1" fill="#000"/>
<rect x="17" y="591" width="1" height="18" fill="#000"/>
<rect x="18" y="591" width="742" height="17" fill="#ffffff"/>
<rect x="18" y="608" width="743" height="1" fill="#c0c0c0"/>
<rect x="90" y="591" width="1" height="18" fill="#c0c0c0"/>
<rect x="174" y="591" width="1" height="18" fill="#c0c0c0"/>
<rect x="239" y="591" width="1" height="18" fill="#c0c0c0"/>
<rect x="423" y="591" width="1" height="18" fill="#c0c0c0"/>
<rect x="482" y="591" width="1" height="18" fill="#c0c0c0"/>
<rect x="570" y="591" width="1" height="18" fill="#c0c0c0"/>
<rect x="630" y="591" width="1" height="18" fill="#c0c0c0"/>
<rect x="695" y="591" width="1" height="18" fill="#c0c0c0"/>
<rect x="760" y="591" width="1" height="18" fill="#c0c0c0"/>
<text transform="translate(87 604) scale(0.885 1)" font-size="12" fill="#800000" text-anchor="end">225</text>
<text transform="translate(93.5 604) scale(0.885 1)" font-size="12" fill="#000">1.1.2.02</text>
<text transform="translate(242 604) scale(0.8983 1)" font-size="12" fill="#000">IMPOSTOS A RECUPERAR</text>
<text transform="translate(567 604) scale(0.885 1)" font-size="12" fill="#800000" text-anchor="end">87.373,64</text>
<rect x="594" y="593" width="13" height="13" fill="#fff"/>
<rect x="594" y="593" width="12" height="1" fill="#808080"/>
<rect x="594" y="593" width="1" height="12" fill="#808080"/>
<rect x="595" y="594" width="10" height="1" fill="#000"/>
<rect x="595" y="594" width="1" height="10" fill="#000"/>
<rect x="595" y="604" width="11" height="1" fill="#d4d0c8"/>
<rect x="605" y="594" width="1" height="11" fill="#d4d0c8"/>
<rect x="6" y="609" width="11" height="17" fill="#d4d0c8"/>
<rect x="6" y="609" width="11" height="1" fill="#fff"/>
<rect x="6" y="609" width="1" height="17" fill="#fff"/>
<rect x="6" y="626" width="12" height="1" fill="#000"/>
<rect x="17" y="609" width="1" height="18" fill="#000"/>
<rect x="18" y="609" width="742" height="17" fill="#e6e6e6"/>
<rect x="18" y="626" width="743" height="1" fill="#c0c0c0"/>
<rect x="90" y="609" width="1" height="18" fill="#c0c0c0"/>
<rect x="174" y="609" width="1" height="18" fill="#c0c0c0"/>
<rect x="239" y="609" width="1" height="18" fill="#c0c0c0"/>
<rect x="423" y="609" width="1" height="18" fill="#c0c0c0"/>
<rect x="482" y="609" width="1" height="18" fill="#c0c0c0"/>
<rect x="570" y="609" width="1" height="18" fill="#c0c0c0"/>
<rect x="630" y="609" width="1" height="18" fill="#c0c0c0"/>
<rect x="695" y="609" width="1" height="18" fill="#c0c0c0"/>
<rect x="760" y="609" width="1" height="18" fill="#c0c0c0"/>
<text transform="translate(87 622) scale(0.885 1)" font-size="12" fill="#800000" text-anchor="end">226</text>
<text transform="translate(93.5 622) scale(0.885 1)" font-size="12" fill="#000">1.1.2.02.001</text>
<text transform="translate(242 622) scale(0.8952 1)" font-size="12" fill="#000">ICMS a Recuperar</text>
<text transform="translate(567 622) scale(0.885 1)" font-size="12" fill="#800000" text-anchor="end">3.621,61</text>
<g clip-path="url(#rfclip)">
<text transform="translate(698.5 622) scale(0.885 1)" font-size="12" fill="#000">1.01.05.05.09</text>
</g>
<rect x="594" y="611" width="13" height="13" fill="#fff"/>
<rect x="594" y="611" width="12" height="1" fill="#808080"/>
<rect x="594" y="611" width="1" height="12" fill="#808080"/>
<rect x="595" y="612" width="10" height="1" fill="#000"/>
<rect x="595" y="612" width="1" height="10" fill="#000"/>
<rect x="595" y="622" width="11" height="1" fill="#d4d0c8"/>
<rect x="605" y="612" width="1" height="11" fill="#d4d0c8"/>
<rect x="6" y="627" width="11" height="17" fill="#d4d0c8"/>
<rect x="6" y="627" width="11" height="1" fill="#fff"/>
<rect x="6" y="627" width="1" height="17" fill="#fff"/>
<rect x="6" y="644" width="12" height="1" fill="#000"/>
<rect x="17" y="627" width="1" height="18" fill="#000"/>
<rect x="18" y="627" width="742" height="17" fill="#ffffff"/>
<rect x="18" y="644" width="743" height="1" fill="#c0c0c0"/>
<rect x="90" y="627" width="1" height="18" fill="#c0c0c0"/>
<rect x="174" y="627" width="1" height="18" fill="#c0c0c0"/>
<rect x="239" y="627" width="1" height="18" fill="#c0c0c0"/>
<rect x="423" y="627" width="1" height="18" fill="#c0c0c0"/>
<rect x="482" y="627" width="1" height="18" fill="#c0c0c0"/>
<rect x="570" y="627" width="1" height="18" fill="#c0c0c0"/>
<rect x="630" y="627" width="1" height="18" fill="#c0c0c0"/>
<rect x="695" y="627" width="1" height="18" fill="#c0c0c0"/>
<rect x="760" y="627" width="1" height="18" fill="#c0c0c0"/>
<text transform="translate(87 640) scale(0.885 1)" font-size="12" fill="#800000" text-anchor="end">227</text>
<text transform="translate(93.5 640) scale(0.885 1)" font-size="12" fill="#000">1.1.2.02.002</text>
<text transform="translate(242 640) scale(0.8963 1)" font-size="12" fill="#000">PIS a Recuperar</text>
<text transform="translate(567 640) scale(0.885 1)" font-size="12" fill="#800000" text-anchor="end">0,00</text>
<g clip-path="url(#rfclip)">
<text transform="translate(698.5 640) scale(0.885 1)" font-size="12" fill="#000">1.01.05.05.07</text>
</g>
<rect x="594" y="629" width="13" height="13" fill="#fff"/>
<rect x="594" y="629" width="12" height="1" fill="#808080"/>
<rect x="594" y="629" width="1" height="12" fill="#808080"/>
<rect x="595" y="630" width="10" height="1" fill="#000"/>
<rect x="595" y="630" width="1" height="10" fill="#000"/>
<rect x="595" y="640" width="11" height="1" fill="#d4d0c8"/>
<rect x="605" y="630" width="1" height="11" fill="#d4d0c8"/>
<rect x="6" y="645" width="11" height="17" fill="#d4d0c8"/>
<rect x="6" y="645" width="11" height="1" fill="#fff"/>
<rect x="6" y="645" width="1" height="17" fill="#fff"/>
<rect x="6" y="662" width="12" height="1" fill="#000"/>
<rect x="17" y="645" width="1" height="18" fill="#000"/>
<rect x="18" y="645" width="742" height="17" fill="#e6e6e6"/>
<rect x="18" y="662" width="743" height="1" fill="#c0c0c0"/>
<rect x="90" y="645" width="1" height="18" fill="#c0c0c0"/>
<rect x="174" y="645" width="1" height="18" fill="#c0c0c0"/>
<rect x="239" y="645" width="1" height="18" fill="#c0c0c0"/>
<rect x="423" y="645" width="1" height="18" fill="#c0c0c0"/>
<rect x="482" y="645" width="1" height="18" fill="#c0c0c0"/>
<rect x="570" y="645" width="1" height="18" fill="#c0c0c0"/>
<rect x="630" y="645" width="1" height="18" fill="#c0c0c0"/>
<rect x="695" y="645" width="1" height="18" fill="#c0c0c0"/>
<rect x="760" y="645" width="1" height="18" fill="#c0c0c0"/>
<text transform="translate(87 658) scale(0.885 1)" font-size="12" fill="#800000" text-anchor="end">228</text>
<text transform="translate(93.5 658) scale(0.885 1)" font-size="12" fill="#000">1.1.2.02.003</text>
<text transform="translate(242 658) scale(0.885 1)" font-size="12" fill="#000">COFINS a Recuperar</text>
<text transform="translate(567 658) scale(0.885 1)" font-size="12" fill="#800000" text-anchor="end">0,00</text>
<g clip-path="url(#rfclip)">
<text transform="translate(698.5 658) scale(0.885 1)" font-size="12" fill="#000">1.01.05.05.09</text>
</g>
<rect x="594" y="647" width="13" height="13" fill="#fff"/>
<rect x="594" y="647" width="12" height="1" fill="#808080"/>
<rect x="594" y="647" width="1" height="12" fill="#808080"/>
<rect x="595" y="648" width="10" height="1" fill="#000"/>
<rect x="595" y="648" width="1" height="10" fill="#000"/>
<rect x="595" y="658" width="11" height="1" fill="#d4d0c8"/>
<rect x="605" y="648" width="1" height="11" fill="#d4d0c8"/>
<pattern id="dith" x="0" y="0" width="2" height="2" patternUnits="userSpaceOnUse"><rect width="2" height="2" fill="#fff"/><rect width="1" height="1" fill="#d4d0c8"/><rect x="1" y="1" width="1" height="1" fill="#d4d0c8"/></pattern>
<rect x="771" y="106" width="16" height="573" fill="url(#dith)"/>
<rect x="771" y="106" width="16" height="16" fill="#d4d0c8"/>
<rect x="771" y="106" width="16" height="1" fill="#d4d0c8"/>
<rect x="771" y="106" width="1" height="16" fill="#d4d0c8"/>
<rect x="771" y="121" width="16" height="1" fill="#404040"/>
<rect x="786" y="106" width="1" height="16" fill="#404040"/>
<rect x="772" y="120" width="14" height="1" fill="#808080"/>
<rect x="785" y="107" width="1" height="14" fill="#808080"/>
<rect x="772" y="107" width="13" height="1" fill="#fff"/>
<rect x="772" y="107" width="1" height="13" fill="#fff"/>
<rect x="775" y="115" width="7" height="1" fill="#000"/>
<rect x="776" y="114" width="5" height="1" fill="#000"/>
<rect x="777" y="113" width="3" height="1" fill="#000"/>
<rect x="778" y="112" width="1" height="1" fill="#000"/>
<rect x="771" y="122" width="16" height="61" fill="#d4d0c8"/>
<rect x="771" y="122" width="16" height="1" fill="#d4d0c8"/>
<rect x="771" y="122" width="1" height="61" fill="#d4d0c8"/>
<rect x="771" y="182" width="16" height="1" fill="#404040"/>
<rect x="786" y="122" width="1" height="61" fill="#404040"/>
<rect x="772" y="181" width="14" height="1" fill="#808080"/>
<rect x="785" y="123" width="1" height="59" fill="#808080"/>
<rect x="772" y="123" width="13" height="1" fill="#fff"/>
<rect x="772" y="123" width="1" height="58" fill="#fff"/>
<rect x="771" y="663" width="16" height="16" fill="#d4d0c8"/>
<rect x="771" y="663" width="16" height="1" fill="#d4d0c8"/>
<rect x="771" y="663" width="1" height="16" fill="#d4d0c8"/>
<rect x="771" y="678" width="16" height="1" fill="#404040"/>
<rect x="786" y="663" width="1" height="16" fill="#404040"/>
<rect x="772" y="677" width="14" height="1" fill="#808080"/>
<rect x="785" y="664" width="1" height="14" fill="#808080"/>
<rect x="772" y="664" width="13" height="1" fill="#fff"/>
<rect x="772" y="664" width="1" height="13" fill="#fff"/>
<rect x="775" y="669" width="7" height="1" fill="#000"/>
<rect x="776" y="670" width="5" height="1" fill="#000"/>
<rect x="777" y="671" width="3" height="1" fill="#000"/>
<rect x="778" y="672" width="1" height="1" fill="#000"/>
<rect x="699" y="687" width="80" height="26" fill="#d4d0c8"/>
<rect x="699" y="687" width="80" height="1" fill="#fff"/>
<rect x="699" y="687" width="1" height="26" fill="#fff"/>
<rect x="699" y="712" width="80" height="1" fill="#404040"/>
<rect x="778" y="687" width="1" height="26" fill="#404040"/>
<rect x="700" y="711" width="78" height="1" fill="#808080"/>
<rect x="777" y="688" width="1" height="24" fill="#808080"/>
<rect x="722" y="692" width="12" height="1" fill="#000"/>
<rect x="722" y="692" width="1" height="13" fill="#000"/>
<rect x="733" y="692" width="1" height="13" fill="#000"/>
<rect x="723" y="693" width="4" height="2" fill="#ffff00"/>
<rect x="723" y="693" width="1" height="11" fill="#ffff00"/>
<rect x="724" y="695" width="1" height="9" fill="#ffff00"/>
<rect x="725" y="695" width="1" height="13" fill="#000"/>
<rect x="726" y="694" width="1" height="2" fill="#000"/>
<rect x="727" y="693" width="1" height="1" fill="#000"/>
<path d="M726 696 L733 693 V705 L726 708 Z" fill="#808000" shape-rendering="auto"/>
<rect x="732" y="694" width="1" height="1" fill="#c8c8a0"/>
<rect x="729" y="695" width="1" height="1" fill="#c8c8a0"/>
<rect x="731" y="695" width="1" height="1" fill="#c8c8a0"/>
<rect x="726" y="696" width="1" height="1" fill="#c8c8a0"/>
<rect x="728" y="696" width="1" height="1" fill="#c8c8a0"/>
<rect x="730" y="696" width="1" height="1" fill="#c8c8a0"/>
<rect x="732" y="696" width="1" height="1" fill="#c8c8a0"/>
<rect x="727" y="697" width="1" height="1" fill="#c8c8a0"/>
<rect x="729" y="697" width="1" height="1" fill="#c8c8a0"/>
<rect x="731" y="697" width="1" height="1" fill="#c8c8a0"/>
<rect x="726" y="698" width="1" height="1" fill="#c8c8a0"/>
<rect x="728" y="698" width="1" height="1" fill="#c8c8a0"/>
<rect x="730" y="698" width="1" height="1" fill="#c8c8a0"/>
<rect x="732" y="698" width="1" height="1" fill="#c8c8a0"/>
<rect x="727" y="699" width="1" height="1" fill="#c8c8a0"/>
<rect x="729" y="699" width="1" height="1" fill="#c8c8a0"/>
<rect x="731" y="699" width="1" height="1" fill="#c8c8a0"/>
<rect x="726" y="700" width="1" height="1" fill="#c8c8a0"/>
<rect x="728" y="700" width="1" height="1" fill="#c8c8a0"/>
<rect x="730" y="700" width="1" height="1" fill="#c8c8a0"/>
<rect x="732" y="700" width="1" height="1" fill="#c8c8a0"/>
<rect x="727" y="701" width="1" height="1" fill="#c8c8a0"/>
<rect x="729" y="701" width="1" height="1" fill="#c8c8a0"/>
<rect x="731" y="701" width="1" height="1" fill="#c8c8a0"/>
<rect x="726" y="702" width="1" height="1" fill="#c8c8a0"/>
<rect x="728" y="702" width="1" height="1" fill="#c8c8a0"/>
<rect x="730" y="702" width="1" height="1" fill="#c8c8a0"/>
<rect x="732" y="702" width="1" height="1" fill="#c8c8a0"/>
<rect x="727" y="703" width="1" height="1" fill="#c8c8a0"/>
<rect x="729" y="703" width="1" height="1" fill="#c8c8a0"/>
<rect x="731" y="703" width="1" height="1" fill="#c8c8a0"/>
<rect x="726" y="704" width="1" height="1" fill="#c8c8a0"/>
<rect x="728" y="704" width="1" height="1" fill="#c8c8a0"/>
<rect x="730" y="704" width="1" height="1" fill="#c8c8a0"/>
<rect x="732" y="704" width="1" height="1" fill="#c8c8a0"/>
<rect x="727" y="705" width="1" height="1" fill="#c8c8a0"/>
<rect x="729" y="705" width="1" height="1" fill="#c8c8a0"/>
<rect x="731" y="705" width="1" height="1" fill="#c8c8a0"/>
<rect x="726" y="706" width="1" height="1" fill="#c8c8a0"/>
<rect x="728" y="706" width="1" height="1" fill="#c8c8a0"/>
<rect x="730" y="706" width="1" height="1" fill="#c8c8a0"/>
<rect x="727" y="700" width="3" height="2" fill="#000"/>
<rect x="728" y="699" width="2" height="1" fill="#fff"/>
<rect x="733" y="704" width="1" height="1" fill="#000"/>
<rect x="717" y="704" width="5" height="1" fill="#000"/>
<rect x="717" y="705" width="1" height="1" fill="#808000"/>
<rect x="719" y="705" width="1" height="1" fill="#808000"/>
<rect x="721" y="705" width="1" height="1" fill="#808000"/>
<rect x="723" y="705" width="1" height="1" fill="#808000"/>
<rect x="725" y="705" width="1" height="1" fill="#808000"/>
<rect x="727" y="705" width="1" height="1" fill="#808000"/>
<rect x="729" y="705" width="1" height="1" fill="#808000"/>
<rect x="731" y="705" width="1" height="1" fill="#808000"/>
<rect x="733" y="705" width="1" height="1" fill="#808000"/>
<rect x="718" y="706" width="1" height="1" fill="#808000"/>
<rect x="720" y="706" width="1" height="1" fill="#808000"/>
<rect x="722" y="706" width="1" height="1" fill="#808000"/>
<rect x="724" y="706" width="1" height="1" fill="#808000"/>
<rect x="726" y="706" width="1" height="1" fill="#808000"/>
<rect x="728" y="706" width="1" height="1" fill="#808000"/>
<rect x="730" y="706" width="1" height="1" fill="#808000"/>
<rect x="732" y="706" width="1" height="1" fill="#808000"/>
<rect x="717" y="707" width="1" height="1" fill="#808000"/>
<rect x="719" y="707" width="1" height="1" fill="#808000"/>
<rect x="721" y="707" width="1" height="1" fill="#808000"/>
<rect x="723" y="707" width="1" height="1" fill="#808000"/>
<rect x="725" y="707" width="1" height="1" fill="#808000"/>
<rect x="727" y="707" width="1" height="1" fill="#808000"/>
<rect x="729" y="707" width="1" height="1" fill="#808000"/>
<rect x="731" y="707" width="1" height="1" fill="#808000"/>
<rect x="733" y="707" width="1" height="1" fill="#808000"/>
<text x="743.5" y="705" font-size="12" textLength="18" lengthAdjust="spacingAndGlyphs">Sair</text>
</svg>
</body></html>
